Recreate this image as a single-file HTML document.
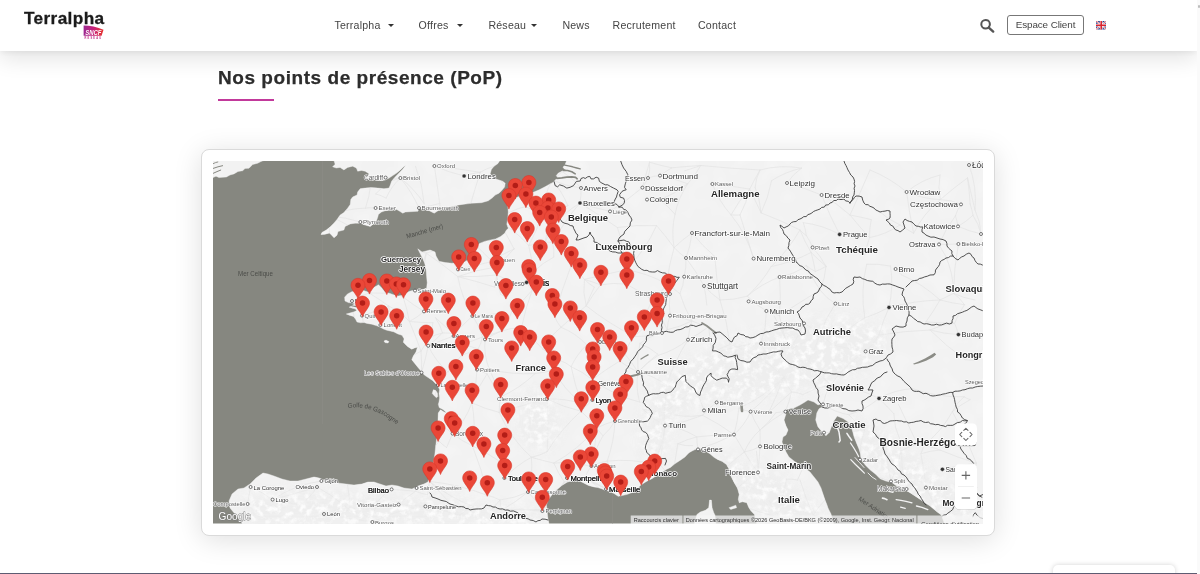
<!DOCTYPE html>
<html lang="fr">
<head>
<meta charset="utf-8">
<title>Terralpha - Nos points de présence (PoP)</title>
<style>
html,body{margin:0;padding:0;background:#fff;}
body{width:1200px;height:574px;position:relative;overflow:hidden;font-family:"Liberation Sans",Arial,sans-serif;color:#333;}
.hdr{position:absolute;left:0;top:0;width:1197.3px;height:51px;background:#fff;box-shadow:0 2px 6px rgba(0,0,0,.06),0 8px 22px rgba(0,0,0,.11);z-index:5;}
.logo{position:absolute;left:24px;top:8.2px;font-weight:700;font-size:17.2px;letter-spacing:.38px;color:#1b1b1b;-webkit-text-stroke:.3px #1b1b1b;line-height:20px;}
.sncf{position:absolute;left:83px;top:25px;width:21px;height:15px;}
.nav a{position:absolute;top:18px;font-size:10.6px;letter-spacing:.22px;line-height:14px;color:#444;text-decoration:none;white-space:nowrap;}
.caret{position:absolute;top:24px;width:0;height:0;border-left:3.2px solid transparent;border-right:3.2px solid transparent;border-top:3.4px solid #333;}
.btn{position:absolute;left:1007px;top:15.3px;width:75px;height:18px;border:1px solid #777;border-radius:3px;font-size:9.9px;line-height:18px;text-align:center;color:#444;letter-spacing:-.1px;}
.title{position:absolute;left:217.8px;-webkit-text-stroke:.25px #2d2d2d;top:66px;font-size:19px;line-height:24px;font-weight:700;color:#2d2d2d;letter-spacing:.55px;white-space:nowrap;}
.bar{position:absolute;left:218px;top:98.5px;width:56px;height:2px;background:#c2399b;}
.card{position:absolute;left:201px;top:149px;width:792px;height:385px;border:1px solid #dadada;border-radius:8px;background:#fff;box-shadow:0 4px 28px rgba(0,0,0,.13);}
.foot{position:absolute;left:0;top:572.5px;width:1200px;height:2px;background:#5d5c72;}
.badge{position:absolute;left:1053px;top:565px;width:122px;height:12px;border-radius:5px 5px 0 0;background:#fff;box-shadow:0 0 5px rgba(0,0,0,.18);}
.sb{position:absolute;left:1197.3px;top:0;width:2.7px;height:574px;background:#fafafa;z-index:9;}
.sb i{position:absolute;left:1.2px;top:5.2px;width:2px;height:3px;background:#bdbdbd;border-radius:1px;}
.hdr,.title,svg.map{will-change:transform;}
</style>
</head>
<body>
<div class="sb"><i></i></div>
<div class="hdr">
  <div class="logo">Terralpha</div>
  <svg class="sncf" viewBox="0 0 21 15">
    <defs><linearGradient id="sg" x1="0" y1="0" x2="1" y2="0"><stop offset="0" stop-color="#9c2a92"/><stop offset=".5" stop-color="#c7207a"/><stop offset="1" stop-color="#e7352b"/></linearGradient></defs>
    <path d="M0.6,0.5 C6.5,0.5 14.5,2 20.5,4.7 L18.6,10.7 L0.6,10.7 Z" fill="url(#sg)"/>
    <text x="2.2" y="9.6" font-family="'Liberation Sans',Arial,sans-serif" font-size="6.7" font-weight="700" font-style="italic" fill="#fff" textLength="16.2" lengthAdjust="spacingAndGlyphs">SNCF</text>
    <text x="1.5" y="14.1" font-family="'Liberation Sans',Arial,sans-serif" font-size="2.6" font-weight="700" fill="#c2308a" textLength="16.6" lengthAdjust="spacing">RÉSEAU</text>
  </svg>
  <div class="nav">
    <a style="left:334.4px">Terralpha</a><span class="caret" style="left:387.8px"></span>
    <a style="left:418.6px">Offres</a><span class="caret" style="left:456.6px"></span>
    <a style="left:488.4px">Réseau</a><span class="caret" style="left:531.2px"></span>
    <a style="left:562.4px">News</a>
    <a style="left:612.6px">Recrutement</a>
    <a style="left:698px">Contact</a>
  </div>
  <svg style="position:absolute;left:979px;top:18px" width="17" height="16" viewBox="0 0 17 16"><circle cx="6.6" cy="6.2" r="4.3" fill="none" stroke="#555" stroke-width="2"/><path d="M9.8,9.6 L14.2,13.6" stroke="#555" stroke-width="2.4" stroke-linecap="round"/></svg>
  <div class="btn">Espace Client</div>
  <svg style="position:absolute;left:1096px;top:21.4px" width="10.4" height="8.4" viewBox="0 0 60 48" preserveAspectRatio="none">
    <rect width="60" height="48" rx="6" fill="#1f3a8a"/>
    <path d="M0,0L60,48M60,0L0,48" stroke="#fff" stroke-width="10"/>
    <path d="M0,0L60,48M60,0L0,48" stroke="#d8232f" stroke-width="4"/>
    <path d="M30,0V48M0,24H60" stroke="#fff" stroke-width="16"/>
    <path d="M30,0V48M0,24H60" stroke="#d8232f" stroke-width="9"/>
  </svg>
</div>
<div class="title">Nos points de présence (PoP)</div>
<div class="bar"></div>
<div class="card"></div>
<svg class="map" width="770" height="362.5" viewBox="213 161 770 362.5" style="position:absolute;left:213px;top:161px;display:block;overflow:hidden">
<rect x="213" y="161" width="770" height="362.5" fill="#868780"/>
<rect x="322" y="161" width="0.7" height="263" fill="#8d8c86"/>
<rect x="612" y="161" width="0.7" height="362.5" fill="#8d8c86"/>
<g fill="#f2f2f2" stroke="#f2f2f2" stroke-width="0.4" stroke-linejoin="round">
<path d="M213,160 L213,177.6 L216,176.2 L219,177.6 L226.4,177 L230,175 L233.9,173.9 L238,171.5 L242.7,170.7 L245,168.5 L249,168.2 L252.7,164.5 L257.7,163.2 L261,161.5 L265.3,160Z"/>
<path d="M333.8,160 L335.1,164.3 L332.6,166.8 L336.3,168 L340.1,167.4 L343.9,169.9 L347.6,167.4 L352.7,166.2 L356.4,168 L357.7,171.2 L361.4,170.5 L365.2,171.2 L369,173.7 L367.7,176.2 L365.2,178.1 L369,179.3 L375.2,180 L381.5,180.6 L385.3,180 L389,178.1 L392.8,175.6 L396.6,173.1 L400.3,169.9 L403.5,166.8 L406,164.9 L402.8,169.3 L399.1,173.1 L395.3,176.8 L391.6,181.2 L390.3,185 L389,188.1 L384,188.7 L377.8,188.1 L371.5,187.5 L365.2,188.1 L360.2,188.7 L357.7,191.9 L357.1,195 L352.7,196.9 L350.8,199.4 L350.2,204.4 L347.6,208.2 L343.9,212.6 L340.1,215.1 L337,219.5 L333.8,223.2 L330.1,227 L326.3,230 L322,232.4 L321,234.6 L325,234.2 L329.5,233 L331.5,235 L334,237.8 L337,235.2 L338,231.5 L343.9,230 L345.1,226.4 L350.2,223.9 L355.2,223.2 L360.2,223.2 L365.2,225.1 L370.2,226.4 L372.7,224.5 L376.5,220.7 L377.8,217 L378.4,214.5 L381.5,212 L385.3,210.7 L390.3,210.1 L396.6,209.4 L399.7,211.3 L402.8,213.2 L405.4,212 L410.4,211.7 L417.9,211.3 L419.2,208.2 L422.9,209.4 L429.2,210.7 L434.2,213.2 L438,210.7 L443,208.8 L447.5,207.6 L458.8,204.9 L471.4,203.3 L481.4,202.7 L488.3,200.8 L492.7,197.6 L495.2,195.1 L499,193.2 L501.5,190.7 L504.6,187 L505.2,183.2 L502.7,181.3 L499,180 L495.2,178.8 L492.7,176.9 L490.2,173.8 L491.4,169.4 L494,166.3 L497.7,163.8 L500.2,160Z"/>
<path d="M566.8,160 L565.1,164.7 L563,167.2 L564.3,168.9 L566.8,169.3 L563.4,170.5 L558.4,173 L556.3,175.6 L557.6,177.6 L555.1,180.2 L553.4,182.2 L550,183.9 L545,186.8 L539.2,189.8 L533.3,192.3 L527.8,193.9 L517.8,197 L512,199 L509.6,201.4 L507.8,206 L508.3,212 L507.8,218 L506.8,224.2 L508.3,228.3 L506.3,230.3 L504.7,233.3 L500.7,236.4 L495.7,238.9 L490.6,239.9 L484.5,241.4 L479.5,243.4 L477.5,245.5 L474.5,248 L476,251 L474,255 L470,259 L464,262 L457,263 L451.7,263.2 L445.4,262.6 L439,261.3 L436,256 L435,252 L430,250 L426,251 L422,252 L417.8,248.8 L420.3,253.8 L422.8,258.8 L424.7,263.2 L426,268.9 L426.6,276.4 L427.2,282.7 L426.6,288.3 L422.8,289.6 L417.8,290.2 L413.6,290.5 L410.3,291 L406,293 L401.9,295.5 L398.5,296 L393.5,294.7 L388.5,293 L385.2,292.2 L381.8,288 L378.5,284.7 L376,286.3 L372.6,288 L368.4,292.2 L363.4,290.5 L357,290.8 L351.7,291.8 L347.5,293.9 L344.6,297.2 L345,301 L348.4,302.6 L351.7,303 L355.5,303.5 L352,305.5 L349.2,307.2 L351.7,308 L355.5,309 L356.7,310.6 L354.2,311.8 L346.3,314 L350,315.4 L353.5,316.5 L355.5,319 L357,322 L360.5,322.8 L364,322.5 L367,323.4 L371.8,324.2 L376.8,325.8 L380.2,327.2 L383.5,329 L386.7,330.2 L393.7,331.8 L397.9,333.9 L402,335.3 L404.1,338.8 L403.4,342.3 L407.6,346.5 L411.8,349.2 L414.6,347.9 L417.4,347.2 L416,352 L413.2,356.2 L411.8,359.7 L414.6,363.2 L418,367.4 L420.8,370.8 L424.3,375 L428.5,377.8 L432.7,380.6 L435.5,383.4 L437.5,385 L439.6,389.6 L439,393.8 L439.6,398 L439,402 L438.3,404.2 L439.2,407.6 L443,409.5 L447,413 L444,412 L440.5,409.8 L438.3,412.9 L438,419.8 L437.5,428.6 L436.9,437.3 L435.7,446 L434.8,454.7 L433.1,463.4 L430.5,472.1 L428,482 L428,482 L424,484 L418,486 L412,489 L404,488 L398,486 L392,485 L386,486 L380,484 L374,482 L368,482 L362,484 L354,485 L346,484 L338,483 L330,481 L324,480 L319,478 L314,477 L306,479 L298,481 L290,481 L282,479 L274,476 L268,474 L263,473 L256,478 L250,484 L244,488 L238,489 L232,494 L229,501 L230,508 L240,520 L243,525 L549.1,525 L547.7,517 L547.1,510.4 L546.4,505 L548.4,499.6 L552.4,494.3 L557.1,489.6 L561.8,485.5 L567.2,482.2 L573.9,480.2 L579.3,480.8 L584.6,483.5 L588.6,485.5 L594,486.9 L598,487.6 L602.1,488.9 L604.7,490.2 L610.1,491.6 L614.1,493.6 L618.2,496.3 L622.2,495.6 L627.5,494.3 L632.9,492.2 L636.9,488.9 L641,484.9 L646.3,481.5 L651.7,478.8 L655.7,476.2 L661.1,472.8 L666.4,469.4 L670.5,467.4 L674.5,464.1 L680,460.4 L685,457 L686.6,455.2 L689,452.8 L692,451 L695,449.6 L697.6,449 L700.5,449.2 L703.1,449.9 L706.5,451.6 L710.1,453.9 L714,457.3 L717.5,459.4 L722.3,461.5 L726.5,464.6 L729,468.9 L730.7,475.6 L734.1,482.4 L737.5,488.3 L739.2,494.2 L738.3,499.3 L739.2,502.7 L742.5,501.8 L746.8,502.7 L748.5,506.9 L751,511.1 L754.4,514.5 L757,525 L834,525 L831,514 L828,508 L827,505 L825,500 L823,494 L821,488 L818,482 L814,477 L810,472 L806,469 L800,465 L794,461 L789,457 L786,452 L784,447 L782,442 L783,437 L786,435 L788,430 L786,426 L784,420 L786,414 L784,411 L788,409 L794,408 L800,405 L805,402 L808,400 L814,402 L818,405 L821,404 L822,407 L819,408.8 L816.8,413.1 L815.7,419.9 L817.9,426.7 L822.5,432.4 L825.9,435.8 L829.3,432.4 L831.5,426.7 L833.8,421 L837.2,416 L843.1,418.5 L847.9,421.8 L851.2,426.6 L852.7,431.4 L854.1,437.1 L856.5,442.9 L859,449 L860.5,454 L861,459.6 L865.5,465.2 L870,469.8 L875.7,474.3 L880.2,478.8 L885.9,481.1 L891.6,482.2 L896.1,485.6 L902.9,489 L909.7,492.4 L916.5,496.9 L923.3,501.5 L930.1,506 L936.9,511.7 L941.4,515.1 L945,525 L985,525 L985,160Z"/>
<path d="M709.6,500.1 L711.3,500.1 L712.1,507.7 L713.8,512.8 L715,515 L716,525 L694,525 L696.9,514.5 L700.3,512 L705.4,510.3 L708.7,507.7Z"/>
<path d="M729,507.7 L735.8,505.2 L736.6,507.7 L730.7,509.4Z"/>
<path d="M384,341 L386,340.2 L388.8,341.5 L388,343 L385,342.6Z"/>
<path d="M433.3,389.8 L435.5,390.3 L437.4,393 L437.8,396.5 L436.5,397.8 L434.5,396 L432.3,393.5Z"/>
<path d="M837.8,428.5 L839,432 L839.6,436 L840.2,440.5 L839,442" fill="none" stroke="#f4f4f4" stroke-width="1.5" stroke-linecap="round"/>
<path d="M846.9,433.3 L849,436.5 L851.7,440.2" fill="none" stroke="#f4f4f4" stroke-width="1.5" stroke-linecap="round"/>
<path d="M850.5,443 L853.5,447.5 L856.5,452.5 L858.6,456.5" fill="none" stroke="#f4f4f4" stroke-width="1.3" stroke-linecap="round"/>
<path d="M850.8,459.6 L855.5,464.5 L861,469.8 L864.4,473.2" fill="none" stroke="#f4f4f4" stroke-width="1.2" stroke-linecap="round"/>
<path d="M855,457.5 L859.5,462.5 L864,467.5" fill="none" stroke="#f4f4f4" stroke-width="0.9" stroke-linecap="round"/>
<path d="M868,473 L872,477 L876,479.5" fill="none" stroke="#f4f4f4" stroke-width="0.9" stroke-linecap="round"/>
<path d="M882.5,498.1 L884.8,498.6 L887,499.7" fill="none" stroke="#f4f4f4" stroke-width="1.6" stroke-linecap="round"/>
<path d="M896.1,499.7 L901,500.4 L906,501.4 L912,502.8" fill="none" stroke="#f4f4f4" stroke-width="1.2" stroke-linecap="round"/>
<path d="M900.6,507.1 L905.2,508.3" fill="none" stroke="#f4f4f4" stroke-width="1.3" stroke-linecap="round"/>
<path d="M916.5,506 L922,507.4 L927.8,509.6" fill="none" stroke="#f4f4f4" stroke-width="1.4" stroke-linecap="round"/>
<path d="M889,491.5 L893,492.5" fill="none" stroke="#f4f4f4" stroke-width="1.2" stroke-linecap="round"/>
</g>
<defs>
<clipPath id="landclip"><path d="M213,160 L213,177.6 L216,176.2 L219,177.6 L226.4,177 L230,175 L233.9,173.9 L238,171.5 L242.7,170.7 L245,168.5 L249,168.2 L252.7,164.5 L257.7,163.2 L261,161.5 L265.3,160Z"/><path d="M333.8,160 L335.1,164.3 L332.6,166.8 L336.3,168 L340.1,167.4 L343.9,169.9 L347.6,167.4 L352.7,166.2 L356.4,168 L357.7,171.2 L361.4,170.5 L365.2,171.2 L369,173.7 L367.7,176.2 L365.2,178.1 L369,179.3 L375.2,180 L381.5,180.6 L385.3,180 L389,178.1 L392.8,175.6 L396.6,173.1 L400.3,169.9 L403.5,166.8 L406,164.9 L402.8,169.3 L399.1,173.1 L395.3,176.8 L391.6,181.2 L390.3,185 L389,188.1 L384,188.7 L377.8,188.1 L371.5,187.5 L365.2,188.1 L360.2,188.7 L357.7,191.9 L357.1,195 L352.7,196.9 L350.8,199.4 L350.2,204.4 L347.6,208.2 L343.9,212.6 L340.1,215.1 L337,219.5 L333.8,223.2 L330.1,227 L326.3,230 L322,232.4 L321,234.6 L325,234.2 L329.5,233 L331.5,235 L334,237.8 L337,235.2 L338,231.5 L343.9,230 L345.1,226.4 L350.2,223.9 L355.2,223.2 L360.2,223.2 L365.2,225.1 L370.2,226.4 L372.7,224.5 L376.5,220.7 L377.8,217 L378.4,214.5 L381.5,212 L385.3,210.7 L390.3,210.1 L396.6,209.4 L399.7,211.3 L402.8,213.2 L405.4,212 L410.4,211.7 L417.9,211.3 L419.2,208.2 L422.9,209.4 L429.2,210.7 L434.2,213.2 L438,210.7 L443,208.8 L447.5,207.6 L458.8,204.9 L471.4,203.3 L481.4,202.7 L488.3,200.8 L492.7,197.6 L495.2,195.1 L499,193.2 L501.5,190.7 L504.6,187 L505.2,183.2 L502.7,181.3 L499,180 L495.2,178.8 L492.7,176.9 L490.2,173.8 L491.4,169.4 L494,166.3 L497.7,163.8 L500.2,160Z"/><path d="M566.8,160 L565.1,164.7 L563,167.2 L564.3,168.9 L566.8,169.3 L563.4,170.5 L558.4,173 L556.3,175.6 L557.6,177.6 L555.1,180.2 L553.4,182.2 L550,183.9 L545,186.8 L539.2,189.8 L533.3,192.3 L527.8,193.9 L517.8,197 L512,199 L509.6,201.4 L507.8,206 L508.3,212 L507.8,218 L506.8,224.2 L508.3,228.3 L506.3,230.3 L504.7,233.3 L500.7,236.4 L495.7,238.9 L490.6,239.9 L484.5,241.4 L479.5,243.4 L477.5,245.5 L474.5,248 L476,251 L474,255 L470,259 L464,262 L457,263 L451.7,263.2 L445.4,262.6 L439,261.3 L436,256 L435,252 L430,250 L426,251 L422,252 L417.8,248.8 L420.3,253.8 L422.8,258.8 L424.7,263.2 L426,268.9 L426.6,276.4 L427.2,282.7 L426.6,288.3 L422.8,289.6 L417.8,290.2 L413.6,290.5 L410.3,291 L406,293 L401.9,295.5 L398.5,296 L393.5,294.7 L388.5,293 L385.2,292.2 L381.8,288 L378.5,284.7 L376,286.3 L372.6,288 L368.4,292.2 L363.4,290.5 L357,290.8 L351.7,291.8 L347.5,293.9 L344.6,297.2 L345,301 L348.4,302.6 L351.7,303 L355.5,303.5 L352,305.5 L349.2,307.2 L351.7,308 L355.5,309 L356.7,310.6 L354.2,311.8 L346.3,314 L350,315.4 L353.5,316.5 L355.5,319 L357,322 L360.5,322.8 L364,322.5 L367,323.4 L371.8,324.2 L376.8,325.8 L380.2,327.2 L383.5,329 L386.7,330.2 L393.7,331.8 L397.9,333.9 L402,335.3 L404.1,338.8 L403.4,342.3 L407.6,346.5 L411.8,349.2 L414.6,347.9 L417.4,347.2 L416,352 L413.2,356.2 L411.8,359.7 L414.6,363.2 L418,367.4 L420.8,370.8 L424.3,375 L428.5,377.8 L432.7,380.6 L435.5,383.4 L437.5,385 L439.6,389.6 L439,393.8 L439.6,398 L439,402 L438.3,404.2 L439.2,407.6 L443,409.5 L447,413 L444,412 L440.5,409.8 L438.3,412.9 L438,419.8 L437.5,428.6 L436.9,437.3 L435.7,446 L434.8,454.7 L433.1,463.4 L430.5,472.1 L428,482 L428,482 L424,484 L418,486 L412,489 L404,488 L398,486 L392,485 L386,486 L380,484 L374,482 L368,482 L362,484 L354,485 L346,484 L338,483 L330,481 L324,480 L319,478 L314,477 L306,479 L298,481 L290,481 L282,479 L274,476 L268,474 L263,473 L256,478 L250,484 L244,488 L238,489 L232,494 L229,501 L230,508 L240,520 L243,525 L549.1,525 L547.7,517 L547.1,510.4 L546.4,505 L548.4,499.6 L552.4,494.3 L557.1,489.6 L561.8,485.5 L567.2,482.2 L573.9,480.2 L579.3,480.8 L584.6,483.5 L588.6,485.5 L594,486.9 L598,487.6 L602.1,488.9 L604.7,490.2 L610.1,491.6 L614.1,493.6 L618.2,496.3 L622.2,495.6 L627.5,494.3 L632.9,492.2 L636.9,488.9 L641,484.9 L646.3,481.5 L651.7,478.8 L655.7,476.2 L661.1,472.8 L666.4,469.4 L670.5,467.4 L674.5,464.1 L680,460.4 L685,457 L686.6,455.2 L689,452.8 L692,451 L695,449.6 L697.6,449 L700.5,449.2 L703.1,449.9 L706.5,451.6 L710.1,453.9 L714,457.3 L717.5,459.4 L722.3,461.5 L726.5,464.6 L729,468.9 L730.7,475.6 L734.1,482.4 L737.5,488.3 L739.2,494.2 L738.3,499.3 L739.2,502.7 L742.5,501.8 L746.8,502.7 L748.5,506.9 L751,511.1 L754.4,514.5 L757,525 L834,525 L831,514 L828,508 L827,505 L825,500 L823,494 L821,488 L818,482 L814,477 L810,472 L806,469 L800,465 L794,461 L789,457 L786,452 L784,447 L782,442 L783,437 L786,435 L788,430 L786,426 L784,420 L786,414 L784,411 L788,409 L794,408 L800,405 L805,402 L808,400 L814,402 L818,405 L821,404 L822,407 L819,408.8 L816.8,413.1 L815.7,419.9 L817.9,426.7 L822.5,432.4 L825.9,435.8 L829.3,432.4 L831.5,426.7 L833.8,421 L837.2,416 L843.1,418.5 L847.9,421.8 L851.2,426.6 L852.7,431.4 L854.1,437.1 L856.5,442.9 L859,449 L860.5,454 L861,459.6 L865.5,465.2 L870,469.8 L875.7,474.3 L880.2,478.8 L885.9,481.1 L891.6,482.2 L896.1,485.6 L902.9,489 L909.7,492.4 L916.5,496.9 L923.3,501.5 L930.1,506 L936.9,511.7 L941.4,515.1 L945,525 L985,525 L985,160Z"/><path d="M709.6,500.1 L711.3,500.1 L712.1,507.7 L713.8,512.8 L715,515 L716,525 L694,525 L696.9,514.5 L700.3,512 L705.4,510.3 L708.7,507.7Z"/><path d="M729,507.7 L735.8,505.2 L736.6,507.7 L730.7,509.4Z"/><path d="M384,341 L386,340.2 L388.8,341.5 L388,343 L385,342.6Z"/><path d="M433.3,389.8 L435.5,390.3 L437.4,393 L437.8,396.5 L436.5,397.8 L434.5,396 L432.3,393.5Z"/></clipPath>
<filter id="blur6" x="-20%" y="-20%" width="140%" height="140%"><feGaussianBlur stdDeviation="7"/></filter>
<filter id="nz1" x="0" y="0" width="100%" height="100%"><feTurbulence type="fractalNoise" baseFrequency="0.16" numOctaves="3" seed="11"/><feColorMatrix type="matrix" values="0 0 0 0 1  0 0 0 0 1  0 0 0 0 1  3.4 0 0 0 -1.55"/></filter>
<filter id="nz2" x="0" y="0" width="100%" height="100%"><feTurbulence type="fractalNoise" baseFrequency="0.13" numOctaves="3" seed="29"/><feColorMatrix type="matrix" values="0 0 0 0 .86  0 0 0 0 .86  0 0 0 0 .86  0 3.2 0 0 -1.5"/></filter>
<filter id="nz3" x="0" y="0" width="100%" height="100%"><feTurbulence type="fractalNoise" baseFrequency="0.045" numOctaves="2" seed="5"/><feColorMatrix type="matrix" values="0 0 0 0 .915  0 0 0 0 .915  0 0 0 0 .915  0 0 2.6 0 -1.25"/></filter>
<mask id="mtmask" maskUnits="userSpaceOnUse" x="213" y="161" width="770" height="363"><g filter="url(#blur6)" fill="#fff"><path d="M640,450 L646,405 L656,382 L690,360 L720,345 L760,335 L800,322 L850,318 L885,328 L888,350 L862,372 L822,386 L790,392 L760,396 L740,400 L715,400 L690,405 L672,420 L668,445 L655,462Z"/><path d="M243,497 L300,492 L400,497 L440,500 L545,513 L545,526 L243,526Z"/><path d="M705,458 L740,458 L782,478 L822,512 L826,526 L772,526 L742,492Z"/><path d="M842,418 L882,432 L932,472 L972,500 L985,526 L948,526 L902,492 L862,452Z"/><path d="M520,395 L550,392 L560,430 L545,450 L520,440Z"/></g></mask>
</defs>
<g clip-path="url(#landclip)">
<rect x="213" y="161" width="770" height="363" filter="url(#nz3)"/>
<path d="M385.6,177.6Q393.0,179.5 400.4,178.0 M400.4,178.0Q411.8,191.7 419.0,208.0 M400.4,178.0Q414.5,188.8 424.2,203.8 M400.4,178.0Q391.1,186.5 386.1,198.1 M400.4,178.0Q394.4,179.9 388.4,181.9 M434.4,166.0Q448.8,172.4 464.1,176.0 M434.4,166.0Q437.2,184.7 439.7,203.5 M434.4,166.0Q457.4,168.6 480.2,172.3 M375.6,208.0Q389.9,210.7 401.5,219.6 M375.6,208.0Q370.5,207.2 365.5,208.1 M360.4,222.0Q345.6,217.4 330.2,215.9 M360.4,222.0Q362.3,228.0 362.9,234.2 M419.0,208.0Q429.5,206.2 439.7,203.5 M464.1,176.0Q471.9,173.3 480.2,172.3 M581.0,188.0Q581.4,195.6 580.0,203.0 M581.0,188.0Q565.9,186.2 552.1,180.1 M581.0,188.0Q573.1,178.0 562.2,171.5 M580.0,203.0Q594.7,208.1 610.0,211.4 M580.0,203.0Q562.7,213.2 551.0,229.6 M580.0,203.0Q564.2,221.4 552.6,242.6 M580.0,203.0Q599.0,214.8 617.4,227.5 M610.0,211.4Q627.0,200.6 642.4,187.6 M648.0,178.0Q653.8,175.7 660.0,175.6 M648.0,178.0Q645.6,183.0 642.4,187.6 M648.0,178.0Q650.6,170.3 649.5,162.2 M660.0,175.6Q674.2,178.4 687.7,183.8 M660.0,175.6Q665.7,171.4 671.8,167.8 M642.4,187.6Q645.9,174.9 649.5,162.2 M647.0,199.6Q653.5,201.3 660.0,200.0 M712.4,184.0Q718.8,201.2 731.0,214.9 M712.4,184.0Q731.2,185.8 749.7,189.1 M787.0,183.0Q804.7,188.0 821.6,195.0 M787.0,183.0Q792.9,174.2 801.6,168.1 M821.6,195.0Q829.4,215.3 839.6,234.4 M821.6,195.0Q837.2,203.1 850.0,215.0 M906.6,192.0Q890.1,177.9 870.0,170.0 M906.6,192.0Q921.3,179.7 940.0,175.0 M906.6,192.0Q922.7,199.0 940.3,199.6 M906.6,192.0Q909.2,212.8 913.6,233.3 M961.0,204.4Q957.3,209.7 955.4,215.8 M961.0,204.4Q951.2,199.6 940.3,199.6 M958.0,226.4Q969.2,231.2 981.0,234.0 M958.0,226.4Q957.3,221.0 955.4,215.8 M958.0,226.4Q966.2,221.8 973.0,215.3 M939.0,244.4Q948.7,244.4 958.4,244.0 M939.0,244.4Q945.4,229.0 955.4,215.8 M939.0,244.4Q941.7,250.0 945.2,255.2 M958.4,244.0Q953.7,268.5 953.6,293.4 M895.6,269.0Q898.5,272.1 901.7,274.9 M969.0,165.0Q977.3,186.8 975.0,210.0 M981.0,234.0Q980.6,221.3 975.0,210.0 M981.0,234.0Q978.7,223.9 973.0,215.3 M692.0,233.0Q690.6,245.9 686.0,258.0 M692.0,233.0Q702.2,245.8 714.7,256.4 M692.0,233.0Q682.4,239.5 674.1,247.6 M839.6,234.4Q822.6,224.9 803.3,222.7 M812.6,247.4Q820.6,255.9 826.0,266.3 M812.6,247.4Q810.1,241.1 806.3,235.5 M686.0,258.0Q686.4,267.5 684.2,276.7 M686.0,258.0Q696.3,271.2 704.0,286.0 M686.0,258.0Q700.2,255.3 714.7,256.4 M686.0,258.0Q679.5,253.4 674.1,247.6 M753.6,258.6Q746.8,236.8 740.0,215.0 M753.6,258.6Q747.0,234.3 731.0,214.9 M684.2,276.7Q683.5,285.6 679.9,293.7 M779.6,277.0Q761.6,283.6 747.2,296.2 M779.6,277.0Q794.3,274.5 806.3,265.5 M779.6,277.0Q781.1,296.2 779.4,315.4 M704.0,286.0Q711.2,293.9 720.0,300.0 M704.0,286.0Q706.0,295.4 706.8,305.0 M766.4,311.0Q766.6,327.8 761.0,343.6 M766.4,311.0Q755.8,304.9 747.2,296.2 M766.4,311.0Q772.6,314.2 779.4,315.4 M804.0,323.4Q797.8,337.1 790.0,350.0 M804.0,323.4Q812.7,327.8 819.8,334.5 M835.4,303.6Q826.2,298.5 820.0,290.0 M835.4,303.6Q825.6,318.1 819.8,334.5 M889.0,307.4Q914.1,300.7 940.0,300.0 M889.0,307.4Q893.7,286.9 890.6,266.1 M889.0,307.4Q883.1,320.9 878.8,335.0 M889.0,307.4Q877.3,313.7 864.8,317.9 M761.0,343.6Q769.2,362.5 784.0,376.8 M761.0,343.6Q748.9,342.8 737.4,347.0 M865.6,351.4Q874.0,344.7 878.8,335.0 M865.6,351.4Q849.8,349.2 834.3,345.3 M865.6,351.4Q844.8,364.6 830.8,385.0 M688.0,339.7Q699.1,334.3 708.7,326.6 M688.0,339.7Q674.3,361.0 666.6,385.2 M688.0,339.7Q689.1,330.1 691.8,320.9 M688.0,339.7Q674.8,350.5 658.4,355.3 M670.0,315.6Q668.7,304.8 670.0,294.0 M670.0,315.6Q681.1,317.3 691.8,320.9 M670.0,315.6Q667.4,322.4 667.3,329.7 M958.4,334.6Q943.9,333.9 930.0,330.0 M958.4,334.6Q957.1,328.8 954.6,323.3 M415.0,290.6Q416.4,270.7 414.5,250.9 M415.0,290.6Q405.4,290.2 396.3,293.0 M415.0,290.6Q403.7,275.5 398.4,257.4 M415.0,290.6Q418.8,271.3 426.3,253.2 M424.0,311.4Q413.2,304.9 403.2,297.2 M424.0,311.4Q417.4,317.5 409.4,321.5 M362.0,315.6Q357.3,308.1 352.0,301.0 M362.0,315.6Q364.9,330.4 367.9,345.2 M362.0,315.6Q375.7,311.8 388.6,306.0 M352.0,301.0Q359.8,295.4 369.2,293.0 M352.0,301.0Q351.9,309.9 354.5,318.4 M352.0,301.0Q341.1,305.1 332.7,313.1 M380.4,325.0Q384.9,315.7 388.6,306.0 M428.2,345.8Q425.7,359.4 421.5,372.6 M428.2,345.8Q440.8,340.6 453.6,336.0 M428.2,345.8Q435.3,361.1 448.0,372.1 M428.2,345.8Q435.7,339.8 442.5,332.9 M421.5,372.6Q422.0,361.8 421.0,351.1 M522.6,284.0Q508.9,281.5 496.6,275.0 M522.6,284.0Q528.3,278.0 533.7,271.7 M526.6,282.4Q529.1,286.6 532.1,290.4 M472.4,316.0Q463.4,325.1 453.7,333.3 M453.6,336.0Q457.8,339.8 461.2,344.2 M485.0,339.4Q493.0,334.6 501.6,331.0 M485.0,339.4Q483.6,355.0 489.4,369.5 M477.0,369.6Q476.8,386.6 471.8,402.8 M477.0,369.6Q483.2,369.3 489.4,369.5 M477.0,369.6Q477.1,359.2 478.1,348.9 M477.0,369.6Q482.1,371.6 487.1,373.9 M670.0,294.0Q668.7,288.9 666.7,284.1 M670.0,294.0Q661.9,298.7 652.5,299.9 M662.0,333.0Q658.8,322.9 656.8,312.4 M662.0,333.0Q648.5,337.2 634.3,336.6 M662.0,333.0Q649.9,336.0 639.9,343.5 M662.0,333.0Q664.9,331.7 667.3,329.7 M638.0,372.0Q628.1,367.8 619.8,361.0 M638.0,372.0Q635.4,387.2 639.6,402.1 M638.0,372.0Q653.7,375.5 666.6,385.2 M638.0,372.0Q647.3,362.5 657.6,354.1 M638.0,372.0Q632.2,362.9 625.4,354.6 M638.0,372.0Q636.6,357.6 639.9,343.5 M638.0,372.0Q647.1,362.3 658.4,355.3 M600.0,342.0Q593.2,360.2 592.4,379.6 M600.0,342.0Q613.0,347.6 625.4,354.6 M547.0,399.0Q552.9,385.3 553.4,370.4 M547.0,399.0Q563.2,407.2 581.0,411.2 M547.0,399.0Q564.9,398.2 581.9,403.7 M547.0,399.0Q523.0,405.1 499.2,412.4 M547.0,399.0Q549.5,425.3 547.1,451.7 M592.4,400.0Q592.0,389.8 592.4,379.6 M592.4,400.0Q586.8,405.7 581.0,411.2 M592.4,400.0Q587.2,401.9 581.9,403.7 M615.0,421.0Q605.3,423.4 596.5,428.2 M615.0,421.0Q614.2,441.7 607.2,461.1 M615.0,421.0Q610.4,429.5 603.0,435.8 M665.0,425.6Q682.1,427.7 696.8,436.9 M665.0,425.6Q663.4,419.1 664.4,412.5 M665.0,425.6Q684.5,422.9 702.6,415.3 M665.0,425.6Q663.2,446.0 653.2,464.0 M665.0,425.6Q663.3,445.0 659.4,464.1 M665.0,425.6Q652.5,419.3 642.8,409.2 M452.6,433.6Q465.9,420.5 471.8,402.8 M452.6,433.6Q461.6,441.2 472.4,445.8 M452.6,433.6Q449.6,440.5 446.6,447.5 M452.6,433.6Q443.0,425.1 430.9,421.0 M504.4,478.0Q505.0,470.3 502.4,463.0 M504.4,478.0Q516.2,465.4 531.4,457.3 M528.0,492.0Q536.0,500.1 542.0,509.8 M528.0,492.0Q514.7,498.4 500.0,500.0 M528.0,492.0Q533.2,475.0 531.4,457.3 M528.0,492.0Q515.7,502.2 501.9,510.1 M591.4,466.0Q595.6,447.3 596.5,428.2 M591.4,466.0Q598.9,462.3 607.2,461.1 M591.4,466.0Q594.4,449.8 603.0,435.8 M591.4,466.0Q602.0,472.4 613.3,477.4 M606.0,489.0Q595.8,482.9 585.3,477.3 M542.4,511.0Q556.0,498.5 564.3,482.0 M542.4,511.0Q522.2,509.3 501.9,510.1 M250.6,487.0Q262.3,492.1 272.6,499.6 M250.6,487.0Q248.8,495.4 247.6,504.0 M317.0,487.0Q295.0,493.9 272.6,499.6 M317.0,487.0Q310.5,497.8 300.0,505.0 M317.0,487.0Q332.2,494.9 345.1,506.2 M321.4,481.0Q294.8,484.6 272.6,499.6 M321.4,481.0Q334.1,480.7 346.7,478.4 M391.6,489.4Q403.6,490.0 415.6,491.3 M391.6,489.4Q383.3,494.2 377.3,501.6 M391.6,489.4Q392.2,476.1 398.5,464.4 M272.6,499.6Q286.2,502.9 300.0,505.0 M398.6,504.6Q412.0,505.3 425.4,506.4 M398.6,504.6Q406.3,496.9 415.6,491.3 M425.4,506.4Q397.5,509.5 372.4,522.0 M425.4,506.4Q442.9,509.9 460.0,515.0 M324.0,514.0Q348.1,518.7 372.4,522.0 M324.0,514.0Q336.9,511.6 350.0,510.0 M324.0,514.0Q335.0,511.3 345.1,506.2 M879.0,398.4Q865.7,409.9 848.7,414.7 M879.0,398.4Q886.7,405.7 893.8,413.7 M879.0,398.4Q894.6,389.6 912.4,388.7 M879.0,398.4Q856.3,386.6 830.8,385.0 M716.6,402.4Q727.1,374.7 737.4,347.0 M716.6,402.4Q708.6,407.8 702.6,415.3 M704.0,410.4Q700.8,399.0 694.7,388.9 M750.6,411.6Q745.0,425.1 734.0,434.6 M750.6,411.6Q754.2,421.4 760.0,430.0 M750.6,411.6Q769.3,396.1 784.0,376.8 M750.6,411.6Q744.5,410.6 738.9,408.1 M785.4,411.6Q771.8,419.6 760.0,430.0 M785.4,411.6Q789.4,402.0 791.5,391.9 M785.4,411.6Q798.0,433.4 809.2,455.8 M785.4,411.6Q780.7,412.1 775.9,412.7 M823.0,404.4Q834.7,412.4 848.7,414.7 M823.0,404.4Q824.7,393.8 830.8,385.0 M824.0,432.6Q836.7,450.2 855.5,461.0 M824.0,432.6Q837.4,431.5 850.9,432.6 M734.0,434.6Q716.6,443.5 698.0,449.4 M734.0,434.6Q715.3,434.6 696.8,436.9 M734.0,434.6Q719.1,423.7 702.6,415.3 M734.0,434.6Q739.3,443.2 744.3,452.0 M734.0,434.6Q737.7,421.6 738.9,408.1 M760.0,446.4Q759.4,459.4 758.0,472.4 M760.0,446.4Q760.3,438.2 760.0,430.0 M760.0,446.4Q752.7,450.8 744.3,452.0 M760.0,446.4Q785.4,446.9 809.2,455.8 M698.0,449.4Q696.9,443.2 696.8,436.9 M758.0,472.4Q747.3,479.4 737.5,487.8 M758.0,472.4Q758.4,461.7 756.4,451.3 M758.0,472.4Q750.5,462.6 744.3,452.0 M758.0,472.4Q765.1,496.6 779.1,517.6 M860.0,459.6Q864.1,466.6 865.0,474.6 M860.0,459.6Q874.0,459.3 886.8,453.6 M860.0,459.6Q859.4,444.2 864.4,429.6 M891.0,481.4Q878.5,476.1 865.0,474.6 M891.0,481.4Q898.4,466.8 901.1,450.6 M891.0,481.4Q887.5,467.7 886.8,453.6 M906.6,489.0Q901.1,470.2 901.1,450.6 M942.4,469.3Q959.2,465.2 976.4,463.2 M925.9,487.6Q933.9,503.6 941.9,519.7 M925.9,487.6Q924.3,470.5 920.9,453.8 M515.0,198.0Q532.9,187.7 552.1,180.1 M515.0,198.0Q510.7,202.9 506.6,208.0 M515.0,198.0Q501.2,184.4 493.5,166.6 M525.6,206.6Q534.3,209.9 541.5,215.8 M525.6,206.6Q509.7,210.1 496.9,220.3 M547.6,220.6Q549.3,225.1 551.0,229.6 M547.6,220.6Q544.2,218.6 541.5,215.8 M547.6,220.6Q557.1,212.4 567.8,205.6 M547.6,220.6Q547.7,231.4 545.3,242.0 M551.0,229.6Q552.5,236.0 552.6,242.6 M551.0,229.6Q548.1,235.8 545.3,242.0 M552.6,242.6Q554.6,249.7 553.7,257.1 M552.6,242.6Q549.0,241.9 545.3,242.0 M571.0,266.0Q561.2,290.8 554.6,316.6 M571.0,266.0Q579.0,271.4 584.4,279.4 M458.4,269.4Q449.0,258.8 445.1,245.2 M458.4,269.4Q475.3,265.5 492.3,261.5 M496.6,275.0Q496.4,281.2 494.7,287.1 M496.6,275.0Q498.4,284.6 500.5,294.1 M496.6,275.0Q496.0,271.0 494.4,267.3 M496.6,275.0Q477.3,277.2 457.8,276.6 M600.6,284.8Q592.6,294.8 586.2,305.8 M600.6,284.8Q613.4,282.4 626.3,284.1 M600.6,284.8Q592.6,281.8 584.4,279.4 M505.6,298.0Q503.4,295.6 500.5,294.1 M554.6,316.6Q556.9,322.5 561.0,327.3 M472.6,315.6Q479.2,325.5 482.4,337.0 M472.6,315.6Q486.1,315.8 499.4,313.1 M472.6,315.6Q461.5,297.5 457.8,276.6 M501.6,331.0Q508.1,322.1 511.8,311.8 M501.6,331.0Q492.1,334.3 482.4,337.0 M501.6,331.0Q511.2,327.5 521.4,327.8 M462.0,355.0Q454.2,362.9 448.0,372.1 M462.0,355.0Q470.2,352.5 478.1,348.9 M462.0,355.0Q460.7,349.7 461.2,344.2 M553.4,370.4Q544.3,372.4 535.1,373.6 M553.4,370.4Q564.4,389.9 581.9,403.7 M553.4,370.4Q556.7,365.6 558.8,360.2 M500.4,397.0Q519.9,388.4 535.1,373.6 M500.4,397.0Q496.2,382.7 489.4,369.5 M500.4,397.0Q499.2,404.6 499.2,412.4 M500.4,397.0Q493.5,385.6 487.1,373.9 M471.8,402.8Q476.3,424.2 472.4,445.8 M471.8,402.8Q485.0,409.0 499.2,412.4 M471.8,402.8Q477.7,387.4 487.1,373.9 M619.8,361.0Q605.6,369.5 592.4,379.6 M592.4,379.6Q613.7,395.7 639.6,402.1 M592.4,379.6Q582.6,371.7 571.1,366.6 M631.2,340.2Q626.7,346.7 625.4,354.6 M656.8,312.4Q647.5,326.3 634.3,336.6 M656.8,312.4Q656.0,305.7 652.5,299.9 M656.8,312.4Q663.7,320.0 667.3,329.7 M369.2,293.0Q382.7,293.3 396.3,293.0 M369.2,293.0Q358.8,277.7 348.2,262.4 M369.2,293.0Q356.4,285.0 341.8,281.3 M369.2,293.0Q379.2,299.1 388.6,306.0 M369.2,293.0Q371.4,274.5 378.6,257.4 M369.2,293.0Q368.5,275.8 369.6,258.6 M403.2,297.2Q399.3,295.7 396.3,293.0 M403.2,297.2Q407.2,309.1 409.4,321.5 M396.4,328.2Q391.7,317.4 388.6,306.0 M438.5,385.8Q431.0,402.6 430.9,421.0 M429.5,481.4Q459.2,484.4 487.0,495.2 M429.5,481.4Q445.6,497.4 460.0,515.0 M429.5,481.4Q449.6,497.3 473.4,506.8 M429.5,481.4Q428.6,488.0 427.5,494.7 M581.0,411.2Q589.9,418.7 596.5,428.2 M581.0,411.2Q581.2,407.4 581.9,403.7 M581.0,411.2Q561.0,428.9 547.1,451.7 M596.5,428.2Q599.8,432.0 603.0,435.8 M596.5,428.2Q578.3,449.5 553.8,463.1 M472.4,445.8Q488.0,453.4 502.4,463.0 M472.4,445.8Q482.5,469.7 487.0,495.2 M487.0,495.2Q493.8,496.9 500.0,500.0 M542.0,509.8Q552.7,495.5 564.3,482.0 M542.0,509.8Q521.9,508.4 501.9,510.1 M591.0,466.4Q587.2,471.4 585.3,477.3 M591.0,466.4Q572.7,461.1 553.8,463.1 M606.4,488.6Q594.9,484.8 585.3,477.3 M606.4,488.6Q610.2,483.2 613.3,477.4 M648.4,479.6Q660.4,490.7 673.9,499.9 M740.0,215.0Q735.5,215.3 731.0,214.9 M740.0,215.0Q746.7,202.7 749.7,189.1 M800.0,230.0Q781.0,220.4 761.1,212.9 M800.0,230.0Q804.6,241.7 811.1,252.5 M800.0,230.0Q802.7,233.2 806.3,235.5 M800.0,230.0Q788.3,250.4 771.2,266.6 M850.0,215.0Q860.3,192.6 870.0,170.0 M850.0,215.0Q860.7,217.0 871.2,219.6 M850.0,215.0Q859.4,226.6 869.5,237.6 M900.0,225.0Q886.1,234.5 869.5,237.6 M900.0,225.0Q888.0,219.7 878.5,210.8 M900.0,225.0Q906.8,229.2 913.6,233.3 M940.0,300.0Q923.0,284.1 901.7,274.9 M940.0,300.0Q946.8,296.6 953.6,293.4 M940.0,300.0Q952.1,303.3 964.5,304.7 M940.0,300.0Q933.6,311.4 925.9,321.9 M930.0,330.0Q941.6,324.2 954.6,323.3 M930.0,330.0Q904.2,330.9 878.8,335.0 M930.0,330.0Q946.3,346.3 965.1,359.6 M820.0,290.0Q812.2,278.3 806.3,265.5 M820.0,290.0Q799.6,302.6 779.4,315.4 M820.0,290.0Q825.2,278.7 826.0,266.3 M790.0,350.0Q783.2,332.6 774.3,316.2 M790.0,350.0Q804.4,341.3 819.8,334.5 M790.0,350.0Q796.7,356.6 803.6,363.0 M790.0,350.0Q782.3,333.4 779.4,315.4 M720.0,300.0Q733.9,300.2 747.2,296.2 M720.0,300.0Q716.3,278.3 714.7,256.4 M720.0,300.0Q727.4,321.7 730.0,344.5 M760.0,430.0Q749.6,439.2 744.3,452.0 M760.0,430.0Q769.2,422.5 775.9,412.7 M800.0,480.0Q805.4,498.0 813.1,515.2 M900.0,440.0Q909.2,440.1 917.4,444.1 M900.0,440.0Q899.5,445.4 901.1,450.6 M900.0,440.0Q894.0,427.5 893.8,413.7 M940.0,450.0Q932.2,447.1 924.1,445.0 M940.0,450.0Q930.2,450.6 920.9,453.8 M940.0,450.0Q957.8,457.6 976.4,463.2 M350.0,510.0Q349.3,494.1 346.7,478.4 M350.0,510.0Q347.6,508.0 345.1,506.2 M350.0,510.0Q361.6,512.8 372.0,518.6 M350.0,510.0Q363.6,505.5 377.3,501.6 M460.0,515.0Q465.9,509.6 473.4,506.8 M500.0,500.0Q499.9,505.3 501.9,510.1 M500.0,500.0Q495.2,506.1 489.6,511.5 M660.0,200.0Q675.0,193.8 687.7,183.8 M660.0,200.0Q668.3,206.2 675.0,214.2 M760.0,170.0Q755.7,178.1 755.1,187.3 M760.0,170.0Q780.6,164.4 801.6,168.1 M760.0,170.0Q754.5,179.4 749.7,189.1 M760.0,170.0Q730.3,168.5 700.7,165.5 M940.0,175.0Q937.6,187.3 940.3,199.6 M975.0,210.0Q971.1,194.0 967.5,177.9 M975.0,300.0Q963.8,298.2 953.6,293.4 M975.0,360.0Q970.0,360.7 965.1,359.6 M541.5,215.8Q543.2,196.9 552.1,180.1 M541.5,215.8Q553.7,208.3 567.8,205.6 M541.5,215.8Q536.9,231.4 528.7,245.5 M755.1,187.3Q760.0,199.6 761.1,212.9 M679.9,293.7Q673.8,288.2 666.7,284.1 M679.9,293.7Q684.4,308.0 691.8,320.9 M367.9,345.2Q358.8,373.8 355.6,403.6 M367.9,345.2Q358.0,334.5 344.7,328.6 M367.9,345.2Q382.6,356.4 399.3,364.4 M354.5,318.4Q344.0,314.1 332.7,313.1 M375.6,193.9Q381.2,195.2 386.1,198.1 M375.6,193.9Q382.0,187.9 388.4,181.9 M607.2,461.1Q610.5,469.2 613.3,477.4 M607.2,461.1Q630.5,458.6 653.2,464.0 M410.8,242.0Q412.9,246.3 414.5,250.9 M410.8,242.0Q427.9,244.7 445.1,245.2 M410.8,242.0Q403.0,248.4 398.4,257.4 M410.8,242.0Q406.5,230.7 401.5,219.6 M739.7,505.0Q739.5,496.3 737.5,487.8 M739.7,505.0Q724.7,498.3 710.9,489.3 M739.7,505.0Q717.7,499.1 695.4,503.4 M739.7,505.0Q759.1,512.3 779.1,517.6 M967.5,177.9Q969.5,190.8 970.1,203.9 M967.5,177.9Q953.4,188.1 940.3,199.6 M890.6,266.1Q878.8,263.5 866.7,264.3 M424.2,203.8Q422.7,184.3 415.5,166.2 M531.4,457.3Q510.4,438.4 499.2,412.4 M531.4,457.3Q539.7,455.7 547.1,451.7 M531.4,457.3Q542.5,460.6 553.8,463.1 M747.2,296.2Q761.4,283.2 771.2,266.6 M687.7,183.8Q678.3,197.7 675.0,214.2 M687.7,183.8Q695.5,175.6 700.7,165.5 M368.9,235.8Q386.9,231.1 401.5,219.6 M368.9,235.8Q368.3,247.2 369.6,258.6 M535.1,373.6Q512.0,374.8 489.4,369.5 M625.9,269.8Q624.6,248.0 617.4,227.5 M625.9,269.8Q647.7,272.9 666.7,284.1 M625.9,269.8Q625.2,277.0 626.3,284.1 M625.9,269.8Q645.5,250.6 656.6,225.6 M625.9,269.8Q605.1,274.4 584.4,279.4 M848.7,414.7Q856.2,422.5 864.4,429.6 M673.0,478.7Q681.0,479.7 688.8,481.7 M673.0,478.7Q674.6,461.1 677.8,443.8 M673.0,478.7Q675.2,489.2 673.9,499.9 M673.0,478.7Q665.7,471.8 659.4,464.1 M806.3,265.5Q810.4,269.1 815.3,271.5 M970.1,203.9Q972.0,209.4 973.0,215.3 M429.2,338.5Q435.2,334.2 442.5,332.9 M429.2,338.5Q432.4,331.0 432.9,322.8 M429.2,338.5Q424.9,344.7 421.0,351.1 M355.6,403.6Q344.9,427.7 332.6,451.1 M355.6,403.6Q366.6,405.2 377.7,404.0 M355.6,403.6Q351.3,423.7 355.9,443.8 M784.0,376.8Q763.4,357.7 737.4,347.0 M784.0,376.8Q786.1,385.1 791.5,391.9 M784.0,376.8Q764.8,397.1 738.9,408.1 M784.0,376.8Q777.3,394.9 768.8,412.3 M708.7,326.6Q699.9,324.7 691.8,320.9 M708.7,326.6Q709.6,340.0 712.4,353.1 M878.5,503.9Q872.9,488.7 865.0,474.6 M878.5,503.9Q891.5,511.4 906.5,512.2 M369.6,415.6Q374.8,410.6 377.7,404.0 M369.6,415.6Q365.8,431.2 355.9,443.8 M369.6,415.6Q372.2,423.1 376.2,429.9 M752.6,521.5Q766.3,522.6 779.1,517.6 M866.7,264.3Q860.1,290.9 864.8,317.9 M581.9,403.7Q574.7,385.7 571.1,366.6 M439.7,203.5Q439.8,224.7 445.1,245.2 M368.5,439.9Q378.9,451.8 385.2,466.4 M414.5,250.9Q420.6,250.7 426.3,253.2 M585.3,477.3Q575.1,481.2 564.3,482.0 M585.3,477.3Q596.1,484.4 604.7,494.1 M382.6,324.1Q387.2,315.6 388.6,306.0 M688.8,481.7Q682.9,492.1 673.9,499.9 M688.8,481.7Q688.7,489.7 691.2,497.4 M688.8,481.7Q700.1,483.1 711.4,485.1 M865.0,474.6Q853.5,480.7 841.9,486.6 M865.0,474.6Q859.1,468.6 855.5,461.0 M511.8,311.8Q522.2,301.4 532.1,290.4 M564.3,482.0Q558.0,473.1 553.8,463.1 M445.1,245.2Q459.4,243.1 474.0,243.3 M445.1,245.2Q427.7,231.9 413.0,215.9 M445.1,245.2Q436.4,250.9 426.3,253.2 M482.4,337.0Q481.5,343.4 478.1,348.9 M482.4,337.0Q491.8,325.8 499.4,313.1 M482.4,337.0Q472.2,341.7 461.2,344.2 M571.1,366.6Q565.7,361.9 558.8,360.2 M571.1,366.6Q576.8,354.3 586.7,344.9 M952.4,411.6Q941.8,431.3 924.1,445.0 M952.4,411.6Q960.7,404.7 970.1,399.6 M952.4,411.6Q956.5,402.9 964.0,396.8 M952.4,411.6Q966.3,436.5 976.4,463.2 M666.6,385.2Q665.4,398.8 664.4,412.5 M771.6,180.6Q768.5,197.5 761.1,212.9 M771.6,180.6Q785.5,171.7 801.6,168.1 M917.4,444.1Q908.9,446.5 901.1,450.6 M917.4,444.1Q907.9,424.3 898.5,404.4 M586.2,305.8Q608.7,323.6 634.3,336.6 M586.2,305.8Q573.2,316.1 561.0,327.3 M586.2,305.8Q589.8,296.3 594.3,287.2 M586.2,305.8Q582.5,292.8 584.4,279.4 M397.6,391.2Q391.9,396.5 385.4,400.8 M397.6,391.2Q400.8,378.0 399.3,364.4 M397.6,391.2Q417.7,402.2 430.9,421.0 M370.6,185.4Q379.5,183.6 388.4,181.9 M370.6,185.4Q369.4,197.1 365.5,208.1 M466.3,219.9Q470.9,231.4 474.0,243.3 M466.3,219.9Q481.7,216.5 496.9,220.3 M466.3,219.9Q472.6,195.9 480.2,172.3 M552.1,180.1Q562.2,191.4 567.8,205.6 M552.1,180.1Q557.8,176.6 562.2,171.5 M552.1,180.1Q553.8,173.6 556.6,167.6 M330.2,215.9Q347.0,224.1 362.9,234.2 M330.2,215.9Q347.0,208.3 365.5,208.1 M330.2,215.9Q327.2,236.7 333.2,256.9 M330.2,215.9Q343.8,192.6 357.2,169.2 M396.3,293.0Q397.7,275.2 398.4,257.4 M396.3,293.0Q385.1,276.4 378.6,257.4 M346.7,478.4Q359.6,473.3 373.5,474.2 M731.0,214.9Q738.5,200.7 749.7,189.1 M494.7,287.1Q476.5,281.2 457.8,276.6 M884.4,521.5Q872.3,518.8 859.9,518.5 M884.4,521.5Q895.9,518.0 906.5,512.2 M634.3,336.6Q643.4,318.3 652.5,299.9 M553.7,257.1Q542.5,262.7 533.7,271.7 M871.2,219.6Q869.3,228.5 869.5,237.6 M675.0,214.2Q671.0,230.8 674.1,247.6 M684.7,170.8Q692.8,168.3 700.7,165.5 M674.9,516.2Q659.4,507.3 642.2,502.8 M439.1,441.2Q442.4,444.9 446.6,447.5 M439.1,441.2Q430.8,450.1 425.5,461.0 M439.1,441.2Q432.8,432.0 430.9,421.0 M677.8,443.8Q685.0,446.4 692.7,445.7 M677.8,443.8Q686.9,439.2 696.8,436.9 M545.3,242.0Q537.1,244.3 528.7,245.5 M859.9,518.5Q847.6,504.4 841.9,486.6 M859.9,518.5Q836.1,522.2 813.1,515.2 M864.4,429.6Q857.4,430.2 850.9,432.6 M478.1,348.9Q469.8,346.0 461.2,344.2 M562.2,171.5Q559.7,169.0 556.6,167.6 M348.2,262.4Q347.1,272.6 341.8,281.3 M348.2,262.4Q354.0,247.5 362.9,234.2 M348.2,262.4Q340.4,260.5 333.2,256.9 M348.2,262.4Q359.3,262.7 369.6,258.6 M954.6,323.3Q958.4,313.4 964.5,304.7 M954.6,323.3Q940.2,323.1 925.9,321.9 M941.9,519.7Q923.8,517.7 906.5,512.2 M953.6,293.4Q960.1,298.0 964.5,304.7 M953.6,293.4Q953.6,273.4 945.2,255.2 M474.0,243.3Q465.8,240.1 458.4,235.2 M474.0,243.3Q483.0,252.6 492.3,261.5 M385.4,400.8Q381.3,401.8 377.7,404.0 M385.4,400.8Q407.8,411.6 430.9,421.0 M385.4,400.8Q382.9,416.0 376.2,429.9 M924.1,445.0Q922.6,449.4 920.9,453.8 M819.8,334.5Q826.8,340.3 834.3,345.3 M819.8,334.5Q815.5,348.3 808.7,361.0 M592.1,504.7Q598.1,499.1 604.7,494.1 M592.1,504.7Q616.9,497.9 642.2,502.8 M803.3,222.7Q805.6,228.9 806.3,235.5 M413.0,215.9Q407.2,217.8 401.5,219.6 M425.5,461.0Q412.1,464.0 398.5,464.4 M970.1,399.6Q966.8,398.7 964.0,396.8 M558.8,360.2Q550.7,354.9 542.9,349.2 M964.0,396.8Q937.5,397.6 912.4,388.7 M673.9,499.9Q684.4,502.9 695.4,503.4 M869.5,237.6Q866.7,246.1 864.8,254.9 M494.4,267.3Q493.8,264.3 492.3,261.5 M494.4,267.3Q475.6,269.9 457.8,276.6 M494.4,267.3Q505.4,259.4 514.1,248.9 M415.6,491.3Q421.3,493.8 427.5,494.7 M561.0,327.3Q549.8,336.4 542.9,349.2 M561.0,327.3Q575.9,333.1 586.7,344.9 M710.9,489.3Q702.9,496.0 695.4,503.4 M710.9,489.3Q700.1,491.1 691.2,497.4 M604.7,494.1Q623.6,497.7 642.2,502.8 M657.6,354.1Q649.7,347.2 639.9,343.5 M671.8,167.8Q660.5,165.6 649.5,162.2 M671.8,167.8Q686.3,166.4 700.7,165.5 M617.4,227.5Q636.9,224.6 656.6,225.6 M332.6,451.1Q344.0,446.8 355.9,443.8 M442.5,332.9Q440.3,324.7 435.4,317.6 M442.5,332.9Q448.1,333.0 453.7,333.3 M542.9,349.2Q532.5,338.1 521.4,327.8 M399.3,364.4Q409.6,356.8 421.0,351.1 M492.3,261.5Q497.9,241.3 496.9,220.3 M492.3,261.5Q502.3,253.7 514.1,248.9 M834.3,345.3Q846.3,328.0 864.8,317.9 M730.0,344.5Q733.7,345.7 737.4,347.0 M730.0,344.5Q720.6,347.7 712.4,353.1 M664.4,412.5Q683.2,418.4 702.6,415.3 M664.4,412.5Q679.7,400.8 694.7,388.9 M664.4,412.5Q653.5,411.4 642.8,409.2 M642.2,502.8Q623.6,498.6 605.7,491.8 M786.6,479.2Q781.2,498.1 779.1,517.6 M786.6,479.2Q792.2,478.6 797.5,480.1 M409.4,321.5Q421.1,322.6 432.9,322.8 M409.4,321.5Q400.7,311.4 388.6,306.0 M409.4,321.5Q415.6,336.1 421.0,351.1 M377.4,248.4Q386.8,255.4 398.4,257.4 M377.4,248.4Q377.3,253.0 378.6,257.4 M841.9,486.6Q841.2,500.4 844.8,513.7 M841.9,486.6Q822.7,474.3 809.2,455.8 M841.9,486.6Q849.9,474.4 855.5,461.0 M841.9,486.6Q824.1,497.5 813.1,515.2 M430.9,421.0Q403.7,426.5 376.2,429.9 M761.1,212.9Q755.5,201.0 749.7,189.1 M976.4,463.2Q971.6,481.8 968.7,500.9 M435.4,317.6Q444.1,326.1 453.7,333.3 M666.7,284.1Q668.7,265.5 674.1,247.6 M666.7,284.1Q661.5,293.7 652.5,299.9 M457.8,276.6Q442.5,264.2 426.3,253.2 M691.8,320.9Q680.2,327.1 667.3,329.7 M341.8,281.3Q336.0,290.3 330.7,299.5 M737.4,347.0Q724.9,349.8 712.4,353.1 M372.0,518.6Q374.9,510.2 377.3,501.6 M506.6,208.0Q502.9,215.1 496.9,220.3 M744.3,452.0Q725.3,466.0 711.4,485.1 M384.7,471.8Q378.9,472.2 373.5,474.2 M373.5,474.2Q365.6,469.8 358.6,464.2 M626.3,284.1Q640.0,291.1 652.5,299.9 M674.1,247.6Q665.8,236.2 656.6,225.6 M533.7,271.7Q531.7,258.5 528.7,245.5 M826.0,266.3Q818.3,259.6 811.1,252.5 M826.0,266.3Q821.0,269.5 815.3,271.5 M493.5,166.6Q486.4,168.3 480.2,172.3 M808.7,361.0Q818.0,374.7 830.8,385.0 M940.3,199.6Q923.2,213.5 913.6,233.3 M653.2,464.0Q656.3,464.7 659.4,464.1 M791.5,391.9Q797.4,392.4 802.9,394.5 M791.5,391.9Q780.2,402.1 768.8,412.3 M594.3,287.2Q588.8,283.9 584.4,279.4 M496.9,220.3Q506.9,233.7 514.1,248.9 M496.9,220.3Q515.1,229.9 528.7,245.5 M385.2,466.4Q371.8,466.0 358.6,464.2 M521.4,327.8Q525.4,308.7 532.1,290.4 M797.5,480.1Q802.5,467.5 809.2,455.8 M802.9,394.5Q815.9,387.0 830.8,385.0 M855.5,461.0Q850.6,447.2 850.9,432.6 M416.9,291.9Q424.4,273.2 426.3,253.2 M811.1,252.5Q813.8,261.9 815.3,271.5 M811.1,252.5Q792.2,262.4 771.2,266.6 M378.6,257.4Q374.1,258.0 369.6,258.6" fill="none" stroke="#e4e4e4" stroke-width="0.75" stroke-linecap="round"/>
<g mask="url(#mtmask)" opacity=".75"><rect x="213" y="161" width="770" height="363" fill="#ececec"/><rect x="213" y="161" width="770" height="363" filter="url(#nz2)"/><rect x="213" y="161" width="770" height="363" filter="url(#nz1)"/></g>
</g>
<path d="M212.8,163.8 L215.5,162.6 L217.8,162" fill="none" stroke="#868780" stroke-width="0.9" stroke-linecap="round" stroke-linejoin="round"/>
<path d="M213.2,168.4 L218,166.8 L222.6,165.7" fill="none" stroke="#868780" stroke-width="1.0" stroke-linecap="round" stroke-linejoin="round"/>
<path d="M213,173.4 L217,171.6 L220.7,170.1" fill="none" stroke="#868780" stroke-width="1.0" stroke-linecap="round" stroke-linejoin="round"/>
<path d="M564.7,165.1 L568.5,165.9 L572.6,166.8 L576.8,168 L580.2,168.9" fill="none" stroke="#868780" stroke-width="1.4" stroke-linecap="round" stroke-linejoin="round"/>
<path d="M563.4,170.5 L567.6,170.5 L571.8,171.8 L575.2,173.9" fill="none" stroke="#868780" stroke-width="1.6" stroke-linecap="round" stroke-linejoin="round"/>
<path d="M556.8,178.3 L561.8,177.9 L566.8,177.1 L571.8,176.8 L575.6,177.4 L577.2,178.8" fill="none" stroke="#868780" stroke-width="1.7" stroke-linecap="round" stroke-linejoin="round"/>
<path d="M349,305.2 L353,306 L356,306.6" fill="none" stroke="#868780" stroke-width="1.1" stroke-linecap="round" stroke-linejoin="round"/>
<path d="M629.6,376.6 L634,375.6 L638,374.6 L641.8,373.4" fill="none" stroke="#8d8e88" stroke-width="2.0" stroke-linecap="round"/>
<path d="M641,359 L645,356.5 L648,354.8" fill="none" stroke="#8d8e88" stroke-width="1.4" stroke-linecap="round"/>
<path d="M702,323 L707,326 L712,330 L716,333" fill="none" stroke="#8d8e88" stroke-width="1.8" stroke-linecap="round"/>
<path d="M741.5,405.5 L742,411" fill="none" stroke="#8d8e88" stroke-width="2.6" stroke-linecap="round"/>
<path d="M913,363.8 L918,361.8 L925,358.5 L931,355 L934.5,352.8 L936.2,354.6 L933,357.2 L926,360.8 L919,363.3 L914,364.6Z" fill="#8b8c86"/>
<g fill="none" stroke="#3e3e3e" stroke-width="0.9" stroke-linejoin="round" stroke-linecap="round">
<path d="M554.2,181.8 L555.1,185.6 L557.6,186.8 L559.7,184.8 L563.4,186 L566.8,188.1 L570.1,187.3 L573.5,185.6 L575.2,183.1 L576.4,181.4 L580.2,181 L581,178.5 L583.5,177.6 L585.2,178.5 L587.7,176.8 L589.8,176.4 L591,178.9 L593.5,178.9 L596.1,177.2 L598.6,178.1 L599.4,181.4 L601.9,183.1 L605.3,184.8 L607.8,184.8 L610.3,186.4 L613.6,188.1 L617,189.8 L618.2,191.4 L617,194.8 L616.5,197 L615.3,199 L614.4,201.1 L613.6,203.2 L617,204.5 L619,207"/>
<path d="M620.7,161 L622,164.7 L623.6,168 L626.2,171.4 L627.8,174.7 L627.6,177.2 L627,179.7 L626,181.7 L625.3,183.9 L624.5,187.3 L626.2,189.8 L624,190.4 L622,191.4 L619.5,194.8 L620.3,197.3 L623.6,198.1 L624.5,200.6 L624.3,202.9 L622.8,204.8 L619,207"/>
<path d="M619,207 L620,207 L622.3,207.3 L623.8,209.5 L626,210 L627.8,212.3 L629,215 L630.8,217.3 L632,220 L630.3,222.8 L630,226 L628,228 L626,230 L624.5,231.8 L624,234 L622,235.5 L620,237 L618.8,238.9 L618,241 L619.5,243.3 L620,246 L620.5,248.4 L620.8,250.8 L622,253"/>
<path d="M618,241 L621,240.5 L624,240 L626.4,241.3 L629,242 L629.8,244.1 L631,246 L633.1,248.2 L634,251 L633.6,253.3 L633.9,255.7 L634,258"/>
<path d="M557,206 L558.3,207.9 L559,210 L559.7,212.3 L558.5,214.7 L559,217 L560.5,219.5 L562,222 L564.9,223.3 L568,224 L570.3,225.5 L573,226 L573.7,228.6 L575,231 L576,233.4 L578,235 L577.1,237.6 L576,240 L578.6,239.9 L581,239 L584,237.9 L587,237 L589.1,234.8 L590,232 L591,234.8 L593,237 L594.1,239.4 L594,242 L596.7,242.5 L599,244 L601.2,245 L602.6,247.2 L605,248 L607.5,249.4 L610,251 L612.6,251.9 L615.4,252 L618,253 L622,253 L624.7,253.3 L627.4,253.5 L630,254 L632.2,255.8 L634,258 L634.7,260.1 L635.6,262.2 L636.6,264.2 L637.9,266.4 L639.9,267.9 L641.8,269.4 L644.3,270.5 L647,270.3 L649.5,271.7 L652.3,272 L655.1,272 L657.5,270.6 L660,272 L662.7,272.9 L665.2,273 L667.2,274.6 L669.7,274.6 L672.1,276.2 L674.9,276.4 L677,277.4 L679.3,277.2 L676.7,280.7 L674.9,283 L672.9,285.2 L671.4,287.7 L670.1,290.5 L668,292.9 L666.9,295.1 L666.7,297.5 L666.2,299.9 L665.9,302.3 L665.7,304.7 L664.5,306.8 L663.5,308.9 L662.9,311 L663.8,313.5 L662.7,315.5 L662,317.8 L662.2,320.3 L662.3,322.7 L661.5,325 L662,327.6 L661.4,330.4 L662,333"/>
<path d="M662,333 L659,332.6 L656,333.4 L653.2,334.9 L650,335 L647,335.7 L646.3,338 L646.5,340.5 L645.3,342.6 L643.6,344.4 L642.6,346.8 L641,348.7 L639.1,350.1 L637.5,351.8 L636.6,354 L634.8,356.6 L633.1,359.2 L630.7,361.4 L629.6,364.4 L628.1,367.2 L626.2,369.6 L625.9,372 L624.4,374 L627,377.5 L629.6,376"/>
<path d="M641.8,375.3 L642.1,377.7 L642.6,380 L643.6,382.7 L643.2,385.6 L645,387.2 L646.1,389.2 L647.4,391.1 L647.9,393.3 L648.8,395.3 L651,394.3 L653.3,393.7 L655.7,393.9 L658.6,393.7 L661.3,392.5 L663.5,392.3 L665.7,393.3 L667.9,392.6 L670.4,392.1 L672.5,390.5 L673.8,388.6 L675.3,387 L676,384.5 L676.8,382 L678.5,380.3 L680.3,378.6 L681.8,376.7 L685.3,375.3 L685.5,378.5 L686,381.6 L688,383.7 L690.2,385.7 L692.2,387.2 L694.4,388.5 L695.7,392 L697.4,394.3 L699.9,395.5 L700.6,392 L701.7,389.6 L702.7,387.1 L704,384.6 L705.5,382.3 L706.5,380.3 L706.5,378 L707.6,376 L709.2,374.4 L711.1,373.2 L711.1,375.5 L712.5,377.4 L714.6,378.8 L716.7,380.2 L719.5,379.2 L722.2,378.1 L726.4,378.1 L728.1,379.9 L728.5,382.3 L729.2,378.8 L728,376.8 L727.1,374.6 L728.3,372.6 L729.2,370.4 L731.8,369 L734.8,369 L737.6,369.7 L737.4,367.2 L736.9,364.8 L736.7,362.4 L736.2,360 L735.2,357.6 L735.5,355.1 L732,356.5 L727.8,357.2 L725.8,356.3 L723.6,355.8 L720.8,353 L718.4,352 L716,350.9 L712.5,350.9 L713.1,348.1 L713.2,345.3 L715.3,342.5 L716,338.4 L714.6,334.9 L713,333"/>
<path d="M662,333 L664,331.9 L666.2,331.3 L668.5,331.9 L670.8,332.3 L673.2,332.2 L675.2,330.7 L677.6,329.8 L680.1,329.6 L682.9,328.5 L685.4,327 L688.2,326.8 L690.6,325.2 L693.4,325.5 L696,326.5 L699,325.4 L702,324.5"/>
<path d="M648.8,395.3 L646.6,396.2 L644.6,397.4 L644.2,399.9 L643.2,402.3 L644.8,404.3 L646,406.5 L648.3,407.7 L650.2,409.3 L651.4,411.3 L652.3,413.4 L651.1,415.4 L650.2,417.6 L649,419.5 L647.4,421.1 L643.2,421.8 L639,421.8 L639.7,426 L641,427.8 L641.7,429.9 L643.2,431.6 L645.7,432.4 L647.4,434.4 L648.8,438.5 L647.7,440.6 L646.7,442.7 L645.7,445.4 L645.3,448.3 L646.3,450.3 L646.7,452.5 L648.7,454 L650.2,456 L652.8,457.4 L655.7,458 L658.5,458 L661.3,458.7 L665.5,458.4 L666.5,461 L665,465"/>
<path d="M430,493 L431.4,494.8 L432,497 L435,497.9 L438,499 L440.9,500.3 L444,501 L446.3,501.5 L448.1,502.8 L450,504 L453.1,504.8 L456,506 L458.6,506.8 L461.3,506.6 L464,507 L465.8,508.5 L468.2,508.6 L470,510 L473,509.3 L476,509 L478.7,508.9 L481.4,508.9 L484,508 L486,505 L488.4,505.6 L490.8,505.9 L493,507 L495.5,507.1 L497.7,508.4 L500,509 L502.7,508.9 L505.3,510.1 L508,510 L510.5,511.2 L513.4,510.9 L516,512 L518.2,513 L519.8,514.9 L521.9,515.9 L524,517 L525.8,518.4 L528.1,518.8 L530,520 L533.2,520.5 L536,522 L537.9,520.7 L540.2,520.4 L542,519 L545.1,519.2 L548,520"/>
<path d="M714,333 L717,332.3 L720,332 L722.1,333.7 L724.1,335.4 L726.1,337.1 L728,339 L729.6,341 L732,342 L733.1,339.5 L734.4,337.1 L737.1,335.6 L738,333 L740.8,334.5 L744,335 L745.7,336.7 L748,336.9 L750,338 L752.9,337.6 L755.6,336.6 L758,335 L760.5,333.6 L763.5,333.3 L766,332 L768.8,331.8 L771.4,330.9 L774,330 L776.7,329.4 L779.3,328.4 L782,328 L784.7,327.8 L787.3,327.6 L790,328 L792.8,328 L795.3,329.5 L798,330 L799.8,332.3 L801,335 L805,334 L805.5,331 L805,328 L803.4,325.8 L803,323 L802,320.2 L800,318 L799.3,315.9 L798.6,313.7 L797,312 L799.1,310.8 L800.8,309.1 L802,307 L804.1,306.1 L805.7,304.3 L808.2,304.3 L810,303 L811.1,300.7 L813,299 L813.2,296.4 L814,294 L816.1,293.2 L818,292 L819,290 L819.9,287.9 L821.6,286.3 L822,284 L823.9,285.5 L826.1,286.5 L828,288 L830.2,289.4 L831.7,291.8 L834,293 L836.7,292.6 L839.4,292.8 L842,292 L843.9,290.2 L845.7,288.3 L848,287 L850.5,285.5 L853,284 L853.8,281.7 L853.2,279.3 L854,277 L857,277.4 L860,277 L862.3,278.6 L864.8,279.4 L867.3,280.5 L870,281 L872.8,281.3 L874.9,283.2 L877.3,284.5 L880,285 L882.4,284.1 L885,284.2 L887.5,283.9 L890,284 L892.7,285 L895.4,285.9 L898,287 L901,288 L904,289 L902.6,291.9 L902,295 L903.7,296.7 L904.6,298.7 L905,301 L906.5,303.5 L907.5,306.1 L908,309 L909.1,311.9 L909,315 L907.3,317.8 L907,321 L906,323.4 L906,326 L903.1,327.1 L900,327 L896,326 L894,327.5 L892,329 L893.2,330.9 L894.2,332.9 L895,335 L893.7,337.1 L892,339 L891.8,341.7 L891.9,344.3 L892,347 L892.7,349.5 L893,352 L890.7,353.9 L888,355 L886.7,357.2 L885,359 L882.7,360.5 L880,361 L878,361.9 L875.9,362.7 L874.1,364.2 L872.3,365.6 L870,366 L867.6,367 L865,367.2 L862.5,367.3 L860,368 L857.4,368.3 L855.1,369.7 L852.4,369.8 L850,371 L847.9,372.2 L846.1,373.8 L844,375 L841.5,374.9 L839,374.5 L836.5,373.9 L834,374 L831.6,373.7 L829.2,372.9 L826.8,372.9 L824.3,372.8 L822,372 L819.6,371.3 L817.3,370.5 L814.6,370.8 L812.4,369.7 L810,369 L807.6,368.7 L805.3,367.6 L802.9,367.2 L800.4,367.6 L798,367 L795.5,365.4 L792.8,364.6 L790,364 L787.8,362.6 L786,360.7 L784,359 L782,356.8 L781,354 L783,351 L780.6,350.9 L778.3,351.4 L776,352 L773.4,351.9 L770.9,352.6 L768.5,353.3 L766,354 L763.3,354 L760.7,354.6 L758,355 L756.3,356.8 L753.9,357.6 L752,359 L750,362 L746.9,362.2 L744,361 L740.8,360.5 L738,359 L737,355"/>
<path d="M850,203 L848.2,201.3 L845.6,200.9 L844,199 L841,199.6 L838,199 L836.3,200.5 L833.7,200.5 L832.2,202.4 L830,203 L828.4,204.8 L825.7,205 L824.3,207.1 L821.7,207.4 L820,209 L817.9,209.8 L815.8,210.5 L813.7,211.4 L811.9,212.9 L810,214 L807.8,214.6 L806.3,216.6 L803.8,216.6 L802,218 L800,219 L797.9,219.7 L796.3,221.5 L793.8,221.7 L791.7,222.4 L790,224 L788.4,225.9 L786.1,226.9 L784,228 L782.1,226.4 L780,225 L780.6,227.4 L782.4,229.3 L783.4,231.6 L784,234 L786.3,235.7 L787.9,238.1 L790,240 L789,242.6 L788.8,245.4 L788,248 L789.5,249.9 L790.8,251.9 L792,254 L793.2,255.9 L794.1,257.9 L795.6,259.7 L796,262 L798,263.5 L799.6,265.6 L802.1,266.4 L804,268 L805.8,270 L808.3,271 L809.8,273.3 L812,274.8 L815,277 L818,279 L819.7,281.7 L822,284"/>
<path d="M844,161 L844.8,163.4 L846,165.5 L847,167.7 L848,170 L849.5,172.5 L850.8,175 L853,177 L854,179.1 L854.6,181.4 L854.1,183.8 L855,186 L854.1,188.2 L854.5,190.5 L854.3,192.8 L854,195 L852.7,196.9 L852.4,199.2 L851.3,201.2 L850,203"/>
<path d="M850,203 L851.2,201 L853.1,199.6 L854.3,197.6 L856,196 L859.1,196.1 L862,197 L862.7,200.1 L864,203 L865.7,204.6 L868.1,204.7 L869.9,206.3 L872,207 L874.1,208.1 L875.7,209.9 L877.9,210.9 L880,212 L882.5,211.4 L885,211.1 L887.4,210.5 L890,211 L890,213.3 L890.2,215.7 L890,218 L888.2,219.4 L886,220 L887.7,221.5 L889.4,223 L890.5,225.1 L892.8,226 L894,228 L895.6,229.9 L898,230.6 L900,232 L902.6,230.1 L905,228 L904,225 L903,222 L905,219 L907.1,220.5 L909.5,221.4 L912,222 L913.9,224.1 L916,226 L918.3,226.3 L920.6,227 L923,227 L922,229.4 L922,232 L924.1,233.2 L925.8,235 L928,236 L930.9,237.2 L934,237 L937,238 L940,239 L943.1,239.6 L946,241 L946.9,243.4 L947,246 L948.4,247.9 L950.1,249.5 L952,251 L951.8,253.6 L953,256 L955.2,258.4 L958,260 L959.8,258.3 L961.7,256.9 L964,256 L966.3,254.2 L969,253 L971,254.3 L972.1,256.6 L974,258 L974.9,260.3 L976.2,262.3 L978,264 L980.3,264.1 L982.4,265"/>
<path d="M953,256 L950.5,256.1 L948.4,257.6 L946,258 L944.1,259.4 L941.8,260.4 L940,262 L939.6,264.3 L938.5,266.3 L937,268 L935.5,270.1 L935.3,272.7 L934,274.8 L930,275 L927.4,276.2 L924.6,276.9 L922,278 L919.4,278.5 L917.2,280.2 L914.6,280.5 L912,281 L910.1,283.1 L908,285 L906,287"/>
<path d="M909,315 L911.6,316.3 L913.6,318.4 L916,320 L917.7,321.6 L920.1,321.9 L922,323.1 L924,324 L926.6,323.7 L929,324.2 L931.5,325 L934,325 L936.4,324.2 L939.1,325.1 L941.6,324.9 L944,324 L946.6,323.1 L949.4,324 L952,323 L952.1,320.6 L953.1,318.4 L953,316 L955.5,315.4 L957.5,313.7 L960,313 L962.4,312.2 L964.6,311.2 L966.9,310.4 L969,309 L971.3,307.2 L974,306 L975.9,307.5 L977.9,308.9 L980.2,309.7 L982.4,310.6"/>
<path d="M887,359 L888,361 L889.5,362.7 L890,365 L891,367 L892.2,368.9 L892.7,371.1 L894,373 L895.8,374.7 L897.9,376.1 L900.3,377.1 L902,379 L903.8,381.2 L905.9,383.1 L908,385 L910.4,387.2 L912,390 L914.1,391.2 L916.4,391.4 L918.9,391.3 L921,392.4 L923.2,393.7 L926,393.3 L928.3,394.3 L930.5,395.6 L933,396 L935.5,395.7 L938,395.2 L940.5,394.8 L942.9,394.1 L945.4,393.7 L947.8,393 L950.2,392.4 L952.7,392.4 L955,391.2 L957.6,391.2 L960.1,390.9 L962.4,390 L965,389.7 L967.5,388.7 L970,388 L972.7,388 L975.2,387 L977.7,386.5 L980.4,386.2 L983,386"/>
<path d="M887,372 L884.2,373 L882,375 L880.4,376.9 L878,377.7 L876,379 L874.6,380.9 L872.4,382 L871,384 L870.2,386.1 L869.2,388.1 L868,390 L870.5,389.9 L873,390 L871.9,393 L871,396 L868.3,397.2 L866,399 L864.1,400.2 L862,401 L862,403.6 L863,406 L863.1,408.6 L862,411 L858,410 L855.1,410.8 L852,411 L848.8,410.6 L846,409 L842.8,408.6 L840,407 L837.1,406.1 L834,406 L830.9,406.7 L828,408 L824.9,408 L822,407"/>
<path d="M821,372 L819.9,374.3 L818,376 L815.6,378.1 L813,380 L813.7,382.6 L815,385 L816.1,387.7 L818,390 L818.1,393.1 L819,396 L818,400 L819.4,402.1 L821,404"/>
<path d="M926,505 L924.1,503.3 L923,501 L921.4,498.6 L920,496 L918.3,494.3 L917.4,492 L916,490 L914.8,487.9 L913,486.2 L912,484 L909.7,482.3 L908,480 L906.3,477.2 L904,475 L901.5,473.9 L900.3,471.3 L898,470 L896.4,467.6 L894.5,465.5 L892,464 L890.5,462.1 L889.4,460 L888,458 L886.6,455.9 L885,454 L884.2,450.9 L883,448 L883.4,445.2 L882.6,442.6 L882,440 L879.3,438.8 L877,437 L875.4,434.2 L873,432 L873.5,429 L874,426 L873.6,423 L873,420 L876,419 L877.9,420.4 L880.6,420.6 L882.1,422.7 L884.4,423.5 L887.3,422.5 L890,421 L892.2,420.8 L894.4,420.7 L896.6,420.5 L899.1,420.9 L901.6,421 L903.9,422 L906.5,421.8 L908.8,423 L911.2,422.5 L913.7,422.2 L916.1,421.4 L918.6,421.1 L921,420.5 L923.2,421.9 L925.6,422.5 L928.4,422.1 L930.5,423.7 L933,424 L935.4,424.7 L938.1,424.4 L940.5,425.4 L943,425.7 L945.4,426.6 L947.6,425.3 L950.2,425.4 L952.8,425.3 L955,424 L957.4,422.6 L960.2,422.2 L962.4,420.5 L964.8,420.8 L967.3,420.5 L966.5,422.6 L964.4,423.9 L963.5,425.9 L961.9,427.5 L960.9,429.5 L960,431.5 L959.2,433.6 L959.3,435.9 L958.1,437.9 L957.4,440.1 L957.6,442.4 L958.3,444.8 L960.1,446.7 L960.9,449 L962.4,451 L964.1,453.4 L966.2,455.5 L967.3,458.3 L969.8,459.4 L971.8,461.1 L973.4,463.2"/>
<path d="M976.5,488 L976,490.4 L974.6,492.4 L977.4,493.8 L979.5,496 L983,494.5"/>
<path d="M974.6,492.4 L972.2,494 L969.6,495.4 L967.3,497.3 L964.9,498.2 L962.5,499.3 L959.9,499.9 L957.6,501 L956.6,503.3 L955.2,505.3 L953.6,507.2 L952.7,509.5 L950.3,511.5 L947.8,513.2 L946,514.8 L943.4,515.1 L941.7,516.8"/>
<path d="M952.7,392.4 L953,394.9 L954,397.3 L954.6,399.7 L955,402.2 L955.6,404.7 L956.2,407.1 L957.4,409.4 L957.6,412 L959.8,413.5 L961.1,415.7 L962.4,418 L964.7,419.6 L967.3,420.5"/>
<path d="M977,493.1 L978.6,495.6 L981.9,497.2"/>
<path d="M972.9,516.8 L973.6,514.5 L975.3,512.7 L977,515.2 L980.2,517.7 L982.9,518.5"/>
</g>
<circle cx="385.6" cy="177.6" r="1.5" fill="#fff" stroke="#484848" stroke-width="0.75"/>
<circle cx="400.4" cy="178" r="1.5" fill="#fff" stroke="#484848" stroke-width="0.75"/>
<circle cx="434.4" cy="166" r="1.5" fill="#fff" stroke="#484848" stroke-width="0.75"/>
<circle cx="375.6" cy="208" r="1.5" fill="#fff" stroke="#484848" stroke-width="0.75"/>
<circle cx="360.4" cy="222" r="1.5" fill="#fff" stroke="#484848" stroke-width="0.75"/>
<circle cx="419" cy="208" r="1.5" fill="#fff" stroke="#484848" stroke-width="0.75"/>
<circle cx="464.1" cy="176" r="2.1" fill="#333" stroke="#fff" stroke-width="0.5"/>
<circle cx="581" cy="188" r="1.5" fill="#fff" stroke="#484848" stroke-width="0.75"/>
<circle cx="580" cy="203" r="2.1" fill="#333" stroke="#fff" stroke-width="0.5"/>
<circle cx="610" cy="211.4" r="1.5" fill="#fff" stroke="#484848" stroke-width="0.75"/>
<circle cx="648" cy="178" r="1.5" fill="#fff" stroke="#484848" stroke-width="0.75"/>
<circle cx="660" cy="175.6" r="1.5" fill="#fff" stroke="#484848" stroke-width="0.75"/>
<circle cx="642.4" cy="187.6" r="1.5" fill="#fff" stroke="#484848" stroke-width="0.75"/>
<circle cx="647" cy="199.6" r="1.5" fill="#fff" stroke="#484848" stroke-width="0.75"/>
<circle cx="458" cy="269.4" r="1.5" fill="#fff" stroke="#484848" stroke-width="0.75"/>
<circle cx="712.4" cy="184" r="1.5" fill="#fff" stroke="#484848" stroke-width="0.75"/>
<circle cx="787" cy="183" r="1.5" fill="#fff" stroke="#484848" stroke-width="0.75"/>
<circle cx="821.6" cy="195" r="1.5" fill="#fff" stroke="#484848" stroke-width="0.75"/>
<circle cx="906.6" cy="192" r="1.5" fill="#fff" stroke="#484848" stroke-width="0.75"/>
<circle cx="961" cy="204.4" r="1.5" fill="#fff" stroke="#484848" stroke-width="0.75"/>
<circle cx="958" cy="226.4" r="1.5" fill="#fff" stroke="#484848" stroke-width="0.75"/>
<circle cx="939" cy="244.4" r="1.5" fill="#fff" stroke="#484848" stroke-width="0.75"/>
<circle cx="958.4" cy="244" r="1.5" fill="#fff" stroke="#484848" stroke-width="0.75"/>
<circle cx="895.6" cy="269" r="1.5" fill="#fff" stroke="#484848" stroke-width="0.75"/>
<circle cx="969" cy="165" r="1.5" fill="#fff" stroke="#484848" stroke-width="0.75"/>
<circle cx="981" cy="234" r="1.5" fill="#fff" stroke="#484848" stroke-width="0.75"/>
<circle cx="692" cy="233" r="1.5" fill="#fff" stroke="#484848" stroke-width="0.75"/>
<circle cx="839.6" cy="234.4" r="2.1" fill="#333" stroke="#fff" stroke-width="0.5"/>
<circle cx="812.6" cy="247.4" r="1.5" fill="#fff" stroke="#484848" stroke-width="0.75"/>
<circle cx="686" cy="258" r="1.5" fill="#fff" stroke="#484848" stroke-width="0.75"/>
<circle cx="753.6" cy="258.6" r="1.5" fill="#fff" stroke="#484848" stroke-width="0.75"/>
<circle cx="684.2" cy="276.7" r="1.5" fill="#fff" stroke="#484848" stroke-width="0.75"/>
<circle cx="779.6" cy="277" r="1.5" fill="#fff" stroke="#484848" stroke-width="0.75"/>
<circle cx="704" cy="286" r="1.5" fill="#fff" stroke="#484848" stroke-width="0.75"/>
<circle cx="748.6" cy="301.4" r="1.5" fill="#fff" stroke="#484848" stroke-width="0.75"/>
<circle cx="766.4" cy="311" r="1.5" fill="#fff" stroke="#484848" stroke-width="0.75"/>
<circle cx="804" cy="323.4" r="1.5" fill="#fff" stroke="#484848" stroke-width="0.75"/>
<circle cx="835.4" cy="303.6" r="1.5" fill="#fff" stroke="#484848" stroke-width="0.75"/>
<circle cx="889" cy="307.4" r="2.1" fill="#333" stroke="#fff" stroke-width="0.5"/>
<circle cx="761" cy="343.6" r="1.5" fill="#fff" stroke="#484848" stroke-width="0.75"/>
<circle cx="865.6" cy="351.4" r="1.5" fill="#fff" stroke="#484848" stroke-width="0.75"/>
<circle cx="688" cy="339.7" r="1.5" fill="#fff" stroke="#484848" stroke-width="0.75"/>
<circle cx="670" cy="315.6" r="1.5" fill="#fff" stroke="#484848" stroke-width="0.75"/>
<circle cx="958.4" cy="334.6" r="2.1" fill="#333" stroke="#fff" stroke-width="0.5"/>
<circle cx="415" cy="290.6" r="1.5" fill="#fff" stroke="#484848" stroke-width="0.75"/>
<circle cx="424" cy="311.4" r="1.5" fill="#fff" stroke="#484848" stroke-width="0.75"/>
<circle cx="362" cy="315.6" r="1.5" fill="#fff" stroke="#484848" stroke-width="0.75"/>
<circle cx="352" cy="301" r="1.5" fill="#fff" stroke="#484848" stroke-width="0.75"/>
<circle cx="380.4" cy="325" r="1.5" fill="#fff" stroke="#484848" stroke-width="0.75"/>
<circle cx="428.2" cy="345.8" r="1.5" fill="#fff" stroke="#484848" stroke-width="0.75"/>
<circle cx="421.5" cy="372.6" r="1.5" fill="#fff" stroke="#484848" stroke-width="0.75"/>
<circle cx="437.8" cy="385" r="1.5" fill="#fff" stroke="#484848" stroke-width="0.75"/>
<circle cx="522.6" cy="284" r="1.5" fill="#fff" stroke="#484848" stroke-width="0.75"/>
<circle cx="526.6" cy="282.4" r="2.1" fill="#333" stroke="#fff" stroke-width="0.5"/>
<circle cx="472.4" cy="316" r="1.5" fill="#fff" stroke="#484848" stroke-width="0.75"/>
<circle cx="453.6" cy="336" r="1.5" fill="#fff" stroke="#484848" stroke-width="0.75"/>
<circle cx="485" cy="339.4" r="1.5" fill="#fff" stroke="#484848" stroke-width="0.75"/>
<circle cx="477" cy="369.6" r="1.5" fill="#fff" stroke="#484848" stroke-width="0.75"/>
<circle cx="670" cy="294" r="1.5" fill="#fff" stroke="#484848" stroke-width="0.75"/>
<circle cx="662" cy="333" r="1.5" fill="#fff" stroke="#484848" stroke-width="0.75"/>
<circle cx="638" cy="372" r="1.5" fill="#fff" stroke="#484848" stroke-width="0.75"/>
<circle cx="600" cy="342" r="1.5" fill="#fff" stroke="#484848" stroke-width="0.75"/>
<circle cx="547" cy="399" r="1.5" fill="#fff" stroke="#484848" stroke-width="0.75"/>
<circle cx="592.4" cy="400" r="1.5" fill="#fff" stroke="#484848" stroke-width="0.75"/>
<circle cx="615" cy="421" r="1.5" fill="#fff" stroke="#484848" stroke-width="0.75"/>
<circle cx="665" cy="425.6" r="1.5" fill="#fff" stroke="#484848" stroke-width="0.75"/>
<circle cx="452.6" cy="433.6" r="1.5" fill="#fff" stroke="#484848" stroke-width="0.75"/>
<circle cx="504.4" cy="478" r="1.5" fill="#fff" stroke="#484848" stroke-width="0.75"/>
<circle cx="528" cy="492" r="1.5" fill="#fff" stroke="#484848" stroke-width="0.75"/>
<circle cx="567" cy="478" r="1.5" fill="#fff" stroke="#484848" stroke-width="0.75"/>
<circle cx="591.4" cy="466" r="1.5" fill="#fff" stroke="#484848" stroke-width="0.75"/>
<circle cx="606" cy="489" r="1.5" fill="#fff" stroke="#484848" stroke-width="0.75"/>
<circle cx="542.4" cy="511" r="1.5" fill="#fff" stroke="#484848" stroke-width="0.75"/>
<circle cx="250.6" cy="487" r="1.5" fill="#fff" stroke="#484848" stroke-width="0.75"/>
<circle cx="317" cy="487" r="1.5" fill="#fff" stroke="#484848" stroke-width="0.75"/>
<circle cx="321.4" cy="481" r="1.5" fill="#fff" stroke="#484848" stroke-width="0.75"/>
<circle cx="391.6" cy="489.4" r="1.5" fill="#fff" stroke="#484848" stroke-width="0.75"/>
<circle cx="416.6" cy="488" r="1.5" fill="#fff" stroke="#484848" stroke-width="0.75"/>
<circle cx="272.6" cy="499.6" r="1.5" fill="#fff" stroke="#484848" stroke-width="0.75"/>
<circle cx="247.6" cy="504" r="1.5" fill="#fff" stroke="#484848" stroke-width="0.75"/>
<circle cx="398.6" cy="504.6" r="1.5" fill="#fff" stroke="#484848" stroke-width="0.75"/>
<circle cx="425.4" cy="506.4" r="1.5" fill="#fff" stroke="#484848" stroke-width="0.75"/>
<circle cx="324" cy="514" r="1.5" fill="#fff" stroke="#484848" stroke-width="0.75"/>
<circle cx="372.4" cy="522" r="1.5" fill="#fff" stroke="#484848" stroke-width="0.75"/>
<circle cx="879" cy="398.4" r="2.1" fill="#333" stroke="#fff" stroke-width="0.5"/>
<circle cx="716.6" cy="402.4" r="1.5" fill="#fff" stroke="#484848" stroke-width="0.75"/>
<circle cx="704" cy="410.4" r="1.5" fill="#fff" stroke="#484848" stroke-width="0.75"/>
<circle cx="750.6" cy="411.6" r="1.5" fill="#fff" stroke="#484848" stroke-width="0.75"/>
<circle cx="785.4" cy="411.6" r="1.5" fill="#fff" stroke="#484848" stroke-width="0.75"/>
<circle cx="823" cy="404.4" r="1.5" fill="#fff" stroke="#484848" stroke-width="0.75"/>
<circle cx="824" cy="432.6" r="1.5" fill="#fff" stroke="#484848" stroke-width="0.75"/>
<circle cx="734" cy="434.6" r="1.5" fill="#fff" stroke="#484848" stroke-width="0.75"/>
<circle cx="760" cy="446.4" r="1.5" fill="#fff" stroke="#484848" stroke-width="0.75"/>
<circle cx="698" cy="449.4" r="1.5" fill="#fff" stroke="#484848" stroke-width="0.75"/>
<circle cx="758" cy="472.4" r="1.5" fill="#fff" stroke="#484848" stroke-width="0.75"/>
<circle cx="860" cy="459.6" r="1.5" fill="#fff" stroke="#484848" stroke-width="0.75"/>
<circle cx="891" cy="481.4" r="1.5" fill="#fff" stroke="#484848" stroke-width="0.75"/>
<circle cx="906.6" cy="489" r="1.5" fill="#fff" stroke="#484848" stroke-width="0.75"/>
<circle cx="942.4" cy="469.3" r="2.1" fill="#333" stroke="#fff" stroke-width="0.5"/>
<circle cx="925.9" cy="487.6" r="1.5" fill="#fff" stroke="#484848" stroke-width="0.75"/>
<g font-family="'Liberation Sans', Arial, sans-serif" stroke="#fff" stroke-linejoin="round" paint-order="stroke" style="paint-order:stroke">
<text x="364" y="179.9" font-size="6.49" fill="#5a5a5a" stroke-width="1.0" textLength="19.0" lengthAdjust="spacingAndGlyphs">Cardiff</text>
<text x="403" y="180.2" font-size="6.12" fill="#5a5a5a" stroke-width="1.0" textLength="17.0" lengthAdjust="spacingAndGlyphs">Bristol</text>
<text x="437" y="168.2" font-size="6.00" fill="#5a5a5a" stroke-width="1.0" textLength="18.0" lengthAdjust="spacingAndGlyphs">Oxford</text>
<text x="378.4" y="210.2" font-size="6.09" fill="#5a5a5a" stroke-width="1.0" textLength="17.6" lengthAdjust="spacingAndGlyphs">Exeter</text>
<text x="363" y="224.2" font-size="6.24" fill="#5a5a5a" stroke-width="1.0" textLength="26.0" lengthAdjust="spacingAndGlyphs">Plymouth</text>
<text x="421.6" y="210.2" font-size="6.23" fill="#5a5a5a" stroke-width="1.0" textLength="37.4" lengthAdjust="spacingAndGlyphs">Bournemouth</text>
<text x="381" y="261.8" font-size="7.74" fill="#262626" stroke-width="1.5" font-weight="700" textLength="40.0" lengthAdjust="spacingAndGlyphs">Guernesey</text>
<text x="399" y="271.6" font-size="8.20" fill="#262626" stroke-width="1.5" font-weight="700" textLength="26.0" lengthAdjust="spacingAndGlyphs">Jersey</text>
<text x="467.5" y="178.8" font-size="7.83" fill="#2e2e2e" stroke-width="1.2" textLength="28.3" lengthAdjust="spacingAndGlyphs">Londres</text>
<text x="583.6" y="190.8" font-size="7.84" fill="#2e2e2e" stroke-width="1.2" textLength="24.4" lengthAdjust="spacingAndGlyphs">Anvers</text>
<text x="583" y="205.8" font-size="7.78" fill="#2e2e2e" stroke-width="1.2" textLength="32.0" lengthAdjust="spacingAndGlyphs">Bruxelles</text>
<text x="613" y="213.7" font-size="5.72" fill="#5a5a5a" stroke-width="1.0" textLength="14.0" lengthAdjust="spacingAndGlyphs">Liège</text>
<text x="568" y="221.0" font-size="9.47" fill="#262626" stroke-width="1.5" font-weight="700" textLength="40.0" lengthAdjust="spacingAndGlyphs">Belgique</text>
<text x="595.6" y="250.4" font-size="9.38" fill="#262626" stroke-width="1.5" font-weight="700" textLength="56.8" lengthAdjust="spacingAndGlyphs">Luxembourg</text>
<text x="625" y="180.6" font-size="7.20" fill="#2e2e2e" stroke-width="1.2" textLength="20.0" lengthAdjust="spacingAndGlyphs">Essen</text>
<text x="662.4" y="178.5" font-size="8.11" fill="#2e2e2e" stroke-width="1.2" textLength="35.6" lengthAdjust="spacingAndGlyphs">Dortmund</text>
<text x="645" y="190.5" font-size="7.95" fill="#2e2e2e" stroke-width="1.2" textLength="38.0" lengthAdjust="spacingAndGlyphs">Düsseldorf</text>
<text x="649.6" y="202.3" font-size="7.62" fill="#2e2e2e" stroke-width="1.2" textLength="28.4" lengthAdjust="spacingAndGlyphs">Cologne</text>
<text x="460.4" y="271.3" font-size="5.28" fill="#5a5a5a" stroke-width="1.0" textLength="9.6" lengthAdjust="spacingAndGlyphs">Caen</text>
<text x="497" y="261.6" font-size="6.11" fill="#5a5a5a" stroke-width="1.0" textLength="18.0" lengthAdjust="spacingAndGlyphs">Rouen</text>
<text x="715" y="186.2" font-size="6.00" fill="#5a5a5a" stroke-width="1.0" textLength="18.0" lengthAdjust="spacingAndGlyphs">Kassel</text>
<text x="711" y="196.5" font-size="9.61" fill="#262626" stroke-width="1.5" font-weight="700" textLength="48.6" lengthAdjust="spacingAndGlyphs">Allemagne</text>
<text x="789.6" y="185.9" font-size="8.02" fill="#2e2e2e" stroke-width="1.2" textLength="25.4" lengthAdjust="spacingAndGlyphs">Leipzig</text>
<text x="824.4" y="197.8" font-size="7.82" fill="#2e2e2e" stroke-width="1.2" textLength="25.2" lengthAdjust="spacingAndGlyphs">Dresde</text>
<text x="909.6" y="194.9" font-size="8.07" fill="#2e2e2e" stroke-width="1.2" textLength="30.8" lengthAdjust="spacingAndGlyphs">Wrocław</text>
<text x="910" y="207.3" font-size="8.00" fill="#2e2e2e" stroke-width="1.2" textLength="48.0" lengthAdjust="spacingAndGlyphs">Częstochowa</text>
<text x="923.6" y="229.2" font-size="7.89" fill="#2e2e2e" stroke-width="1.2" textLength="32.0" lengthAdjust="spacingAndGlyphs">Katowice</text>
<text x="909" y="247.1" font-size="7.60" fill="#2e2e2e" stroke-width="1.2" textLength="26.6" lengthAdjust="spacingAndGlyphs">Ostrava</text>
<text x="961.4" y="246.1" font-size="5.81" fill="#5a5a5a" stroke-width="1.0" textLength="33.6" lengthAdjust="spacingAndGlyphs">Bielsko-Biała</text>
<text x="898.4" y="271.7" font-size="7.58" fill="#2e2e2e" stroke-width="1.2" textLength="16.0" lengthAdjust="spacingAndGlyphs">Brno</text>
<text x="972" y="168.0" font-size="8.30" fill="#2e2e2e" stroke-width="1.2" textLength="18.0" lengthAdjust="spacingAndGlyphs">Łódź</text>
<text x="694.4" y="235.9" font-size="8.10" fill="#2e2e2e" stroke-width="1.2" textLength="75.6" lengthAdjust="spacingAndGlyphs">Francfort-sur-le-Main</text>
<text x="843" y="237.1" font-size="7.63" fill="#2e2e2e" stroke-width="1.2" textLength="24.6" lengthAdjust="spacingAndGlyphs">Prague</text>
<text x="815" y="249.5" font-size="5.84" fill="#5a5a5a" stroke-width="1.0" textLength="14.6" lengthAdjust="spacingAndGlyphs">Plzeň</text>
<text x="836" y="252.9" font-size="9.73" fill="#262626" stroke-width="1.5" font-weight="700" textLength="42.0" lengthAdjust="spacingAndGlyphs">Tchéquie</text>
<text x="688.5" y="260.2" font-size="6.10" fill="#5a5a5a" stroke-width="1.0" textLength="28.5" lengthAdjust="spacingAndGlyphs">Mannheim</text>
<text x="756.4" y="261.4" font-size="7.84" fill="#2e2e2e" stroke-width="1.2" textLength="39.2" lengthAdjust="spacingAndGlyphs">Nuremberg</text>
<text x="686.6" y="278.8" font-size="6.17" fill="#5a5a5a" stroke-width="1.0" textLength="26.4" lengthAdjust="spacingAndGlyphs">Karlsruhe</text>
<text x="782" y="279.2" font-size="6.13" fill="#5a5a5a" stroke-width="1.0" textLength="31.0" lengthAdjust="spacingAndGlyphs">Ratisbonne</text>
<text x="707" y="289.0" font-size="8.20" fill="#2e2e2e" stroke-width="1.2" textLength="31.0" lengthAdjust="spacingAndGlyphs">Stuttgart</text>
<text x="751.4" y="303.6" font-size="6.12" fill="#5a5a5a" stroke-width="1.0" textLength="29.6" lengthAdjust="spacingAndGlyphs">Augsbourg</text>
<text x="769.4" y="313.8" font-size="7.76" fill="#2e2e2e" stroke-width="1.2" textLength="25.0" lengthAdjust="spacingAndGlyphs">Munich</text>
<text x="774" y="325.6" font-size="6.00" fill="#5a5a5a" stroke-width="1.0" textLength="27.0" lengthAdjust="spacingAndGlyphs">Salzbourg</text>
<text x="838" y="305.8" font-size="6.21" fill="#5a5a5a" stroke-width="1.0" textLength="11.4" lengthAdjust="spacingAndGlyphs">Linz</text>
<text x="892.4" y="310.2" font-size="7.75" fill="#2e2e2e" stroke-width="1.2" textLength="24.0" lengthAdjust="spacingAndGlyphs">Vienne</text>
<text x="813" y="335.4" font-size="9.37" fill="#262626" stroke-width="1.5" font-weight="700" textLength="38.0" lengthAdjust="spacingAndGlyphs">Autriche</text>
<text x="763.6" y="345.8" font-size="6.09" fill="#5a5a5a" stroke-width="1.0" textLength="26.4" lengthAdjust="spacingAndGlyphs">Innsbruck</text>
<text x="868.4" y="353.9" font-size="7.01" fill="#2e2e2e" stroke-width="1.2" textLength="15.2" lengthAdjust="spacingAndGlyphs">Graz</text>
<text x="690.6" y="342.4" font-size="7.85" fill="#2e2e2e" stroke-width="1.2" textLength="21.8" lengthAdjust="spacingAndGlyphs">Zurich</text>
<text x="672.6" y="318.2" font-size="6.07" fill="#5a5a5a" stroke-width="1.0" textLength="54.0" lengthAdjust="spacingAndGlyphs">Fribourg-en-Brisgau</text>
<text x="826" y="391.3" font-size="9.24" fill="#262626" stroke-width="1.5" font-weight="700" textLength="38.0" lengthAdjust="spacingAndGlyphs">Slovénie</text>
<text x="945.6" y="292.0" font-size="9.40" fill="#262626" stroke-width="1.5" font-weight="700" textLength="44.4" lengthAdjust="spacingAndGlyphs">Slovaquie</text>
<text x="961.6" y="337.3" font-size="7.43" fill="#2e2e2e" stroke-width="1.2" textLength="31.4" lengthAdjust="spacingAndGlyphs">Budapest</text>
<text x="955.6" y="357.7" font-size="9.11" fill="#262626" stroke-width="1.5" font-weight="700" textLength="34.4" lengthAdjust="spacingAndGlyphs">Hongrie</text>
<text x="965" y="383.6" font-size="5.60" fill="#5a5a5a" stroke-width="1.0" textLength="19.0" lengthAdjust="spacingAndGlyphs">Szeged</text>
<text x="417.6" y="292.7" font-size="5.94" fill="#5a5a5a" stroke-width="1.0" textLength="28.4" lengthAdjust="spacingAndGlyphs">Saint-Malo</text>
<text x="426.6" y="313.4" font-size="5.63" fill="#5a5a5a" stroke-width="1.0" textLength="19.4" lengthAdjust="spacingAndGlyphs">Rennes</text>
<text x="364.6" y="317.7" font-size="5.84" fill="#5a5a5a" stroke-width="1.0" textLength="22.4" lengthAdjust="spacingAndGlyphs">Quimper</text>
<text x="354.5" y="303.1" font-size="5.78" fill="#5a5a5a" stroke-width="1.0" textLength="13.5" lengthAdjust="spacingAndGlyphs">Brest</text>
<text x="383.6" y="327.2" font-size="6.02" fill="#5a5a5a" stroke-width="1.0" textLength="18.4" lengthAdjust="spacingAndGlyphs">Lorient</text>
<text x="431.3" y="348.3" font-size="7.64" fill="#222222" stroke-width="1.4" textLength="24.2" lengthAdjust="spacingAndGlyphs">Nantes</text>
<text x="431.3" y="348.3" font-size="7.64" fill="#222222" stroke="#222222" stroke-width="0.1" textLength="24.2" lengthAdjust="spacingAndGlyphs">Nantes</text>
<text x="364" y="374.8" font-size="6.05" fill="#5a5a5a" stroke-width="1.0" textLength="55.6" lengthAdjust="spacingAndGlyphs">Les Sables d&#x27;Olonne</text>
<text x="440.6" y="386.7" font-size="5.28" fill="#5a5a5a" stroke-width="1.0" textLength="27.4" lengthAdjust="spacingAndGlyphs">La Rochelle</text>
<text x="494" y="286.3" font-size="6.31" fill="#5a5a5a" stroke-width="1.0" textLength="27.0" lengthAdjust="spacingAndGlyphs">Versailles</text>
<text x="529.6" y="285.7" font-size="8.60" fill="#222222" stroke-width="1.4" textLength="19.6" lengthAdjust="spacingAndGlyphs">Paris</text>
<text x="529.6" y="285.7" font-size="8.60" fill="#222222" stroke="#222222" stroke-width="0.1" textLength="19.6" lengthAdjust="spacingAndGlyphs">Paris</text>
<text x="475" y="317.9" font-size="5.28" fill="#5a5a5a" stroke-width="1.0" textLength="18.0" lengthAdjust="spacingAndGlyphs">Le Mans</text>
<text x="455.5" y="338.2" font-size="6.15" fill="#5a5a5a" stroke-width="1.0" textLength="19.5" lengthAdjust="spacingAndGlyphs">Angers</text>
<text x="488" y="341.6" font-size="6.13" fill="#5a5a5a" stroke-width="1.0" textLength="15.0" lengthAdjust="spacingAndGlyphs">Tours</text>
<text x="480" y="371.7" font-size="5.88" fill="#5a5a5a" stroke-width="1.0" textLength="19.6" lengthAdjust="spacingAndGlyphs">Poitiers</text>
<text x="515.6" y="371.3" font-size="9.27" fill="#262626" stroke-width="1.5" font-weight="700" textLength="30.4" lengthAdjust="spacingAndGlyphs">France</text>
<text x="635" y="296.4" font-size="6.75" fill="#5a5a5a" stroke-width="1.0" textLength="33.0" lengthAdjust="spacingAndGlyphs">Strasbourg</text>
<text x="649" y="335.0" font-size="5.50" fill="#5a5a5a" stroke-width="1.0" textLength="11.0" lengthAdjust="spacingAndGlyphs">Bâle</text>
<text x="657.6" y="365.3" font-size="9.31" fill="#262626" stroke-width="1.5" font-weight="700" textLength="30.0" lengthAdjust="spacingAndGlyphs">Suisse</text>
<text x="640.6" y="374.2" font-size="6.01" fill="#5a5a5a" stroke-width="1.0" textLength="26.4" lengthAdjust="spacingAndGlyphs">Lausanne</text>
<text x="598" y="386.4" font-size="6.57" fill="#2e2e2e" stroke-width="1.2" textLength="23.0" lengthAdjust="spacingAndGlyphs">Genève</text>
<text x="602" y="344.2" font-size="6.14" fill="#5a5a5a" stroke-width="1.0" textLength="14.0" lengthAdjust="spacingAndGlyphs">Dijon</text>
<text x="497" y="401.2" font-size="6.21" fill="#5a5a5a" stroke-width="1.0" textLength="49.0" lengthAdjust="spacingAndGlyphs">Clermont-Ferrand</text>
<text x="595.4" y="402.6" font-size="7.32" fill="#222222" stroke-width="1.4" textLength="15.6" lengthAdjust="spacingAndGlyphs">Lyon</text>
<text x="595.4" y="402.6" font-size="7.32" fill="#222222" stroke="#222222" stroke-width="0.1" textLength="15.6" lengthAdjust="spacingAndGlyphs">Lyon</text>
<text x="617.6" y="423.1" font-size="5.93" fill="#5a5a5a" stroke-width="1.0" textLength="24.4" lengthAdjust="spacingAndGlyphs">Grenoble</text>
<text x="668.4" y="428.4" font-size="7.85" fill="#2e2e2e" stroke-width="1.2" textLength="17.6" lengthAdjust="spacingAndGlyphs">Turin</text>
<text x="455" y="436.0" font-size="6.54" fill="#5a5a5a" stroke-width="1.0" textLength="28.0" lengthAdjust="spacingAndGlyphs">Bordeaux</text>
<text x="508" y="480.7" font-size="7.50" fill="#222222" stroke-width="1.4" textLength="30.0" lengthAdjust="spacingAndGlyphs">Toulouse</text>
<text x="508" y="480.7" font-size="7.50" fill="#222222" stroke="#222222" stroke-width="0.1" textLength="30.0" lengthAdjust="spacingAndGlyphs">Toulouse</text>
<text x="530.6" y="494.2" font-size="6.01" fill="#5a5a5a" stroke-width="1.0" textLength="35.4" lengthAdjust="spacingAndGlyphs">Carcassonne</text>
<text x="570.4" y="480.8" font-size="7.69" fill="#222222" stroke-width="1.4" textLength="37.6" lengthAdjust="spacingAndGlyphs">Montpellier</text>
<text x="570.4" y="480.8" font-size="7.69" fill="#222222" stroke="#222222" stroke-width="0.1" textLength="37.6" lengthAdjust="spacingAndGlyphs">Montpellier</text>
<text x="594" y="468.2" font-size="6.01" fill="#5a5a5a" stroke-width="1.0" textLength="21.6" lengthAdjust="spacingAndGlyphs">Avignon</text>
<text x="609" y="491.8" font-size="7.85" fill="#222222" stroke-width="1.4" textLength="31.4" lengthAdjust="spacingAndGlyphs">Marseille</text>
<text x="609" y="491.8" font-size="7.85" fill="#222222" stroke="#222222" stroke-width="0.1" textLength="31.4" lengthAdjust="spacingAndGlyphs">Marseille</text>
<text x="647" y="476.3" font-size="7.94" fill="#262626" stroke-width="1.5" font-weight="700" textLength="30.0" lengthAdjust="spacingAndGlyphs">Monaco</text>
<text x="545.6" y="513.1" font-size="5.79" fill="#5a5a5a" stroke-width="1.0" textLength="26.4" lengthAdjust="spacingAndGlyphs">Perpignan</text>
<text x="490" y="519.3" font-size="9.26" fill="#262626" stroke-width="1.5" font-weight="700" textLength="36.0" lengthAdjust="spacingAndGlyphs">Andorre</text>
<text x="253.6" y="489.6" font-size="6.24" fill="#2e2e2e" stroke-width="1.2" textLength="30.8" lengthAdjust="spacingAndGlyphs">La Corogne</text>
<text x="295.6" y="489.2" font-size="6.24" fill="#2e2e2e" stroke-width="1.2" textLength="18.4" lengthAdjust="spacingAndGlyphs">Oviedo</text>
<text x="324.4" y="483.2" font-size="6.24" fill="#2e2e2e" stroke-width="1.2" textLength="13.6" lengthAdjust="spacingAndGlyphs">Gijón</text>
<text x="368" y="493.3" font-size="7.55" fill="#222222" stroke-width="1.4" textLength="21.0" lengthAdjust="spacingAndGlyphs">Bilbao</text>
<text x="368" y="493.3" font-size="7.55" fill="#222222" stroke="#222222" stroke-width="0.1" textLength="21.0" lengthAdjust="spacingAndGlyphs">Bilbao</text>
<text x="419.4" y="490.2" font-size="5.98" fill="#5a5a5a" stroke-width="1.0" textLength="42.2" lengthAdjust="spacingAndGlyphs">Saint-Sébastien</text>
<text x="275.6" y="501.8" font-size="6.24" fill="#2e2e2e" stroke-width="1.2" textLength="12.8" lengthAdjust="spacingAndGlyphs">Lugo</text>
<text x="213" y="506.1" font-size="5.87" fill="#5a5a5a" stroke-width="1.0" textLength="32.6" lengthAdjust="spacingAndGlyphs">Compostelle</text>
<text x="357" y="506.8" font-size="6.12" fill="#5a5a5a" stroke-width="1.0" textLength="40.0" lengthAdjust="spacingAndGlyphs">Vitoria-Gasteiz</text>
<text x="428" y="508.6" font-size="6.24" fill="#2e2e2e" stroke-width="1.2" textLength="28.0" lengthAdjust="spacingAndGlyphs">Pampelune</text>
<text x="327" y="516.2" font-size="6.24" fill="#2e2e2e" stroke-width="1.2" textLength="13.0" lengthAdjust="spacingAndGlyphs">León</text>
<text x="375" y="524.7" font-size="6.00" fill="#5a5a5a" stroke-width="1.0" textLength="19.0" lengthAdjust="spacingAndGlyphs">Burgos</text>
<text x="882.4" y="401.1" font-size="7.64" fill="#2e2e2e" stroke-width="1.2" textLength="24.2" lengthAdjust="spacingAndGlyphs">Zagreb</text>
<text x="719.4" y="404.5" font-size="5.96" fill="#5a5a5a" stroke-width="1.0" textLength="24.2" lengthAdjust="spacingAndGlyphs">Bergame</text>
<text x="707.4" y="413.2" font-size="7.78" fill="#2e2e2e" stroke-width="1.2" textLength="18.6" lengthAdjust="spacingAndGlyphs">Milan</text>
<text x="753.6" y="413.7" font-size="5.83" fill="#5a5a5a" stroke-width="1.0" textLength="18.8" lengthAdjust="spacingAndGlyphs">Vérone</text>
<text x="788.4" y="414.4" font-size="7.66" fill="#2e2e2e" stroke-width="1.2" textLength="23.0" lengthAdjust="spacingAndGlyphs">Venise</text>
<text x="826" y="406.5" font-size="5.83" fill="#5a5a5a" stroke-width="1.0" textLength="17.6" lengthAdjust="spacingAndGlyphs">Trieste</text>
<text x="832.6" y="427.8" font-size="9.58" fill="#262626" stroke-width="1.5" font-weight="700" textLength="33.0" lengthAdjust="spacingAndGlyphs">Croatie</text>
<text x="810" y="434.8" font-size="6.00" fill="#5a5a5a" stroke-width="1.0" textLength="12.0" lengthAdjust="spacingAndGlyphs">Pula</text>
<text x="713.6" y="436.8" font-size="6.25" fill="#5a5a5a" stroke-width="1.0" textLength="18.4" lengthAdjust="spacingAndGlyphs">Parme</text>
<text x="763.4" y="449.2" font-size="7.79" fill="#2e2e2e" stroke-width="1.2" textLength="28.6" lengthAdjust="spacingAndGlyphs">Bologne</text>
<text x="701" y="452.0" font-size="7.33" fill="#2e2e2e" stroke-width="1.2" textLength="21.6" lengthAdjust="spacingAndGlyphs">Gênes</text>
<text x="766.6" y="469.4" font-size="8.23" fill="#262626" stroke-width="1.5" font-weight="700" textLength="44.8" lengthAdjust="spacingAndGlyphs">Saint-Marin</text>
<text x="725" y="475.2" font-size="7.87" fill="#2e2e2e" stroke-width="1.2" textLength="30.6" lengthAdjust="spacingAndGlyphs">Florence</text>
<text x="778" y="502.5" font-size="9.66" fill="#262626" stroke-width="1.5" font-weight="700" textLength="22.0" lengthAdjust="spacingAndGlyphs">Italie</text>
<text x="863" y="461.7" font-size="5.74" fill="#5a5a5a" stroke-width="1.0" textLength="15.0" lengthAdjust="spacingAndGlyphs">Zadar</text>
<text x="879.6" y="445.6" font-size="10.08" fill="#262626" stroke-width="1.5" font-weight="700" textLength="96.9" lengthAdjust="spacingAndGlyphs">Bosnie-Herzégovine</text>
<text x="894" y="483.4" font-size="5.65" fill="#5a5a5a" stroke-width="1.0" textLength="11.0" lengthAdjust="spacingAndGlyphs">Split</text>
<text x="877" y="491.3" font-size="6.46" fill="#5a5a5a" stroke-width="1.0" textLength="28.0" lengthAdjust="spacingAndGlyphs">Makarska</text>
<text x="945.6" y="471.7" font-size="6.69" fill="#2e2e2e" stroke-width="1.2" textLength="26.4" lengthAdjust="spacingAndGlyphs">Sarajevo</text>
<text x="929" y="489.8" font-size="6.15" fill="#5a5a5a" stroke-width="1.0" textLength="18.8" lengthAdjust="spacingAndGlyphs">Mostar</text>
<text x="942.4" y="506.4" font-size="8.32" fill="#262626" stroke-width="1.5" font-weight="700" textLength="47.6" lengthAdjust="spacingAndGlyphs">Monténégro</text>
</g>
<g font-family="'Liberation Sans', Arial, sans-serif" fill="#4b4c48" font-size="6.6">
<text x="238" y="276.4" textLength="35" lengthAdjust="spacingAndGlyphs">Mer Celtique</text>
<text transform="translate(407,238.5) rotate(-16)" textLength="38" lengthAdjust="spacingAndGlyphs">Manche (mer)</text>
<path id="gasc" d="M348,408 Q372,404 396,424" fill="none"/>
<text><textPath href="#gasc" textLength="53" lengthAdjust="spacingAndGlyphs">Golfe de Gascogne</textPath></text>
<text transform="translate(858,500) rotate(34)" textLength="40" lengthAdjust="spacingAndGlyphs">Mer Adriatique</text>
</g>
<defs><g id="pin"><path d="M0,0C-0.5,-2.6 -4.7,-7.2 -6.3,-10.55A7,7 0 1 1 6.3,-10.55C4.7,-7.2 0.5,-2.6 0,0Z" fill="#ea4738" stroke="#d8392c" stroke-width="0.6"/><circle cx="0" cy="-13.6" r="2.75" fill="#b31d17"/></g></defs>
<use href="#pin" x="528.9" y="196.1"/>
<use href="#pin" x="515.3" y="199.1"/>
<use href="#pin" x="525.9" y="207.7"/>
<use href="#pin" x="508.9" y="209.1"/>
<use href="#pin" x="548.7" y="213.6"/>
<use href="#pin" x="535.9" y="216.7"/>
<use href="#pin" x="547.9" y="221.7"/>
<use href="#pin" x="558.7" y="222.5"/>
<use href="#pin" x="539.7" y="226.1"/>
<use href="#pin" x="551.3" y="230.7"/>
<use href="#pin" x="514.7" y="233.1"/>
<use href="#pin" x="527.3" y="242.1"/>
<use href="#pin" x="552.9" y="243.7"/>
<use href="#pin" x="561.3" y="255.1"/>
<use href="#pin" x="471.3" y="258.1"/>
<use href="#pin" x="540.3" y="260.5"/>
<use href="#pin" x="496.3" y="261.1"/>
<use href="#pin" x="571.3" y="267.1"/>
<use href="#pin" x="458.7" y="270.5"/>
<use href="#pin" x="474.3" y="272.1"/>
<use href="#pin" x="626.8" y="272.7"/>
<use href="#pin" x="496.9" y="276.1"/>
<use href="#pin" x="579.9" y="278.7"/>
<use href="#pin" x="528.7" y="280.1"/>
<use href="#pin" x="529.3" y="283.6"/>
<use href="#pin" x="600.9" y="285.9"/>
<use href="#pin" x="626.8" y="288.7"/>
<use href="#pin" x="369.5" y="294.1"/>
<use href="#pin" x="386.8" y="294.6"/>
<use href="#pin" x="668.5" y="294.7"/>
<use href="#pin" x="536.3" y="295.7"/>
<use href="#pin" x="396.3" y="297.5"/>
<use href="#pin" x="403.5" y="298.3"/>
<use href="#pin" x="358.0" y="298.9"/>
<use href="#pin" x="505.9" y="299.1"/>
<use href="#pin" x="552.3" y="309.1"/>
<use href="#pin" x="425.9" y="312.5"/>
<use href="#pin" x="657.1" y="313.5"/>
<use href="#pin" x="448.3" y="313.7"/>
<use href="#pin" x="472.9" y="316.7"/>
<use href="#pin" x="362.5" y="316.7"/>
<use href="#pin" x="554.9" y="317.7"/>
<use href="#pin" x="517.3" y="319.1"/>
<use href="#pin" x="570.3" y="321.5"/>
<use href="#pin" x="381.1" y="325.6"/>
<use href="#pin" x="657.1" y="327.1"/>
<use href="#pin" x="396.7" y="329.3"/>
<use href="#pin" x="644.3" y="330.5"/>
<use href="#pin" x="579.7" y="331.1"/>
<use href="#pin" x="501.9" y="332.1"/>
<use href="#pin" x="453.9" y="337.1"/>
<use href="#pin" x="486.3" y="340.1"/>
<use href="#pin" x="631.5" y="341.3"/>
<use href="#pin" x="597.5" y="343.1"/>
<use href="#pin" x="426.1" y="345.7"/>
<use href="#pin" x="520.7" y="346.1"/>
<use href="#pin" x="609.7" y="350.5"/>
<use href="#pin" x="529.7" y="350.7"/>
<use href="#pin" x="548.7" y="355.5"/>
<use href="#pin" x="462.3" y="356.1"/>
<use href="#pin" x="511.7" y="361.5"/>
<use href="#pin" x="620.1" y="362.1"/>
<use href="#pin" x="592.7" y="362.5"/>
<use href="#pin" x="476.3" y="370.1"/>
<use href="#pin" x="594.1" y="370.5"/>
<use href="#pin" x="553.7" y="371.5"/>
<use href="#pin" x="455.9" y="380.1"/>
<use href="#pin" x="592.7" y="380.7"/>
<use href="#pin" x="438.8" y="386.9"/>
<use href="#pin" x="556.3" y="387.7"/>
<use href="#pin" x="626.0" y="395.1"/>
<use href="#pin" x="500.7" y="398.1"/>
<use href="#pin" x="547.7" y="399.5"/>
<use href="#pin" x="452.3" y="400.9"/>
<use href="#pin" x="592.8" y="401.1"/>
<use href="#pin" x="472.1" y="403.9"/>
<use href="#pin" x="620.3" y="407.8"/>
<use href="#pin" x="581.3" y="412.3"/>
<use href="#pin" x="614.9" y="421.5"/>
<use href="#pin" x="507.9" y="423.5"/>
<use href="#pin" x="596.8" y="429.3"/>
<use href="#pin" x="451.3" y="432.2"/>
<use href="#pin" x="454.7" y="436.6"/>
<use href="#pin" x="438.1" y="441.5"/>
<use href="#pin" x="590.3" y="444.7"/>
<use href="#pin" x="472.7" y="446.9"/>
<use href="#pin" x="504.7" y="448.7"/>
<use href="#pin" x="483.9" y="457.5"/>
<use href="#pin" x="502.7" y="464.1"/>
<use href="#pin" x="591.3" y="467.5"/>
<use href="#pin" x="580.3" y="470.5"/>
<use href="#pin" x="440.5" y="474.5"/>
<use href="#pin" x="654.7" y="474.7"/>
<use href="#pin" x="504.7" y="479.1"/>
<use href="#pin" x="567.7" y="480.1"/>
<use href="#pin" x="648.7" y="480.7"/>
<use href="#pin" x="429.8" y="482.5"/>
<use href="#pin" x="604.3" y="484.1"/>
<use href="#pin" x="641.3" y="485.1"/>
<use href="#pin" x="605.3" y="486.6"/>
<use href="#pin" x="606.7" y="489.7"/>
<use href="#pin" x="469.7" y="491.5"/>
<use href="#pin" x="528.7" y="492.5"/>
<use href="#pin" x="545.7" y="493.1"/>
<use href="#pin" x="620.7" y="495.7"/>
<use href="#pin" x="487.3" y="496.3"/>
<use href="#pin" x="542.3" y="510.9"/>
<text x="218.6" y="519.6" font-family="'Liberation Sans', Arial, sans-serif" font-size="10.6" fill="#fff" stroke="#777" stroke-width="0.8" style="paint-order:stroke" textLength="32.5" lengthAdjust="spacingAndGlyphs">Google</text>
<rect x="630.7" y="515.5" width="51.8" height="8.5" fill="#f5f5f5" opacity=".72"/>
<rect x="683.4" y="515.5" width="233" height="8.5" fill="#f5f5f5" opacity=".72"/>
<rect x="917.4" y="515.5" width="66" height="8.5" fill="#f5f5f5" opacity=".72"/>
<g font-family="'Liberation Sans', Arial, sans-serif" font-size="5.6" fill="#2f2f2f">
<text x="633.7" y="521.6" textLength="45.3" lengthAdjust="spacingAndGlyphs">Raccourcis clavier</text>
<text x="685.7" y="521.6" textLength="228" lengthAdjust="spacingAndGlyphs">Données cartographiques ©2026 GeoBasis-DE/BKG (©2009), Google, Inst. Geogr. Nacional</text>
<text x="921.2" y="526" textLength="57.8" lengthAdjust="spacingAndGlyphs">Conditions d'utilisation</text>
</g>
<g>
<rect x="954.8" y="423.8" width="22.2" height="22.2" rx="4.2" fill="#000" opacity=".13" transform="translate(0,.7)"/>
<rect x="954.8" y="423.4" width="22.2" height="22.2" rx="4.2" fill="#fff"/>
<g fill="none" stroke="#666" stroke-width="1.05" stroke-linecap="round" stroke-linejoin="round"><path d="M963.8,430.4 L965.9,428.3 L968,430.4"/><path d="M963.8,438.4 L965.9,440.5 L968,438.4"/><path d="M961.8,432.4 L959.7,434.5 L961.8,436.6"/><path d="M970,432.4 L972.1,434.5 L970,436.6"/></g>
<rect x="954.8" y="464.9" width="22.2" height="45" rx="4.2" fill="#000" opacity=".13"/>
<rect x="954.8" y="464.3" width="22.2" height="45" rx="4.2" fill="#fff"/>
<rect x="958" y="486.1" width="15.8" height="0.6" fill="#e6e6e6"/>
<path d="M961.7,475.4 H970.1 M965.9,471.2 V479.6 M961.7,498 H970.1" stroke="#666" stroke-width="1.1" fill="none"/>
</g>
</svg>
<div class="badge"></div>
<div class="foot"></div>
</body>
</html>
